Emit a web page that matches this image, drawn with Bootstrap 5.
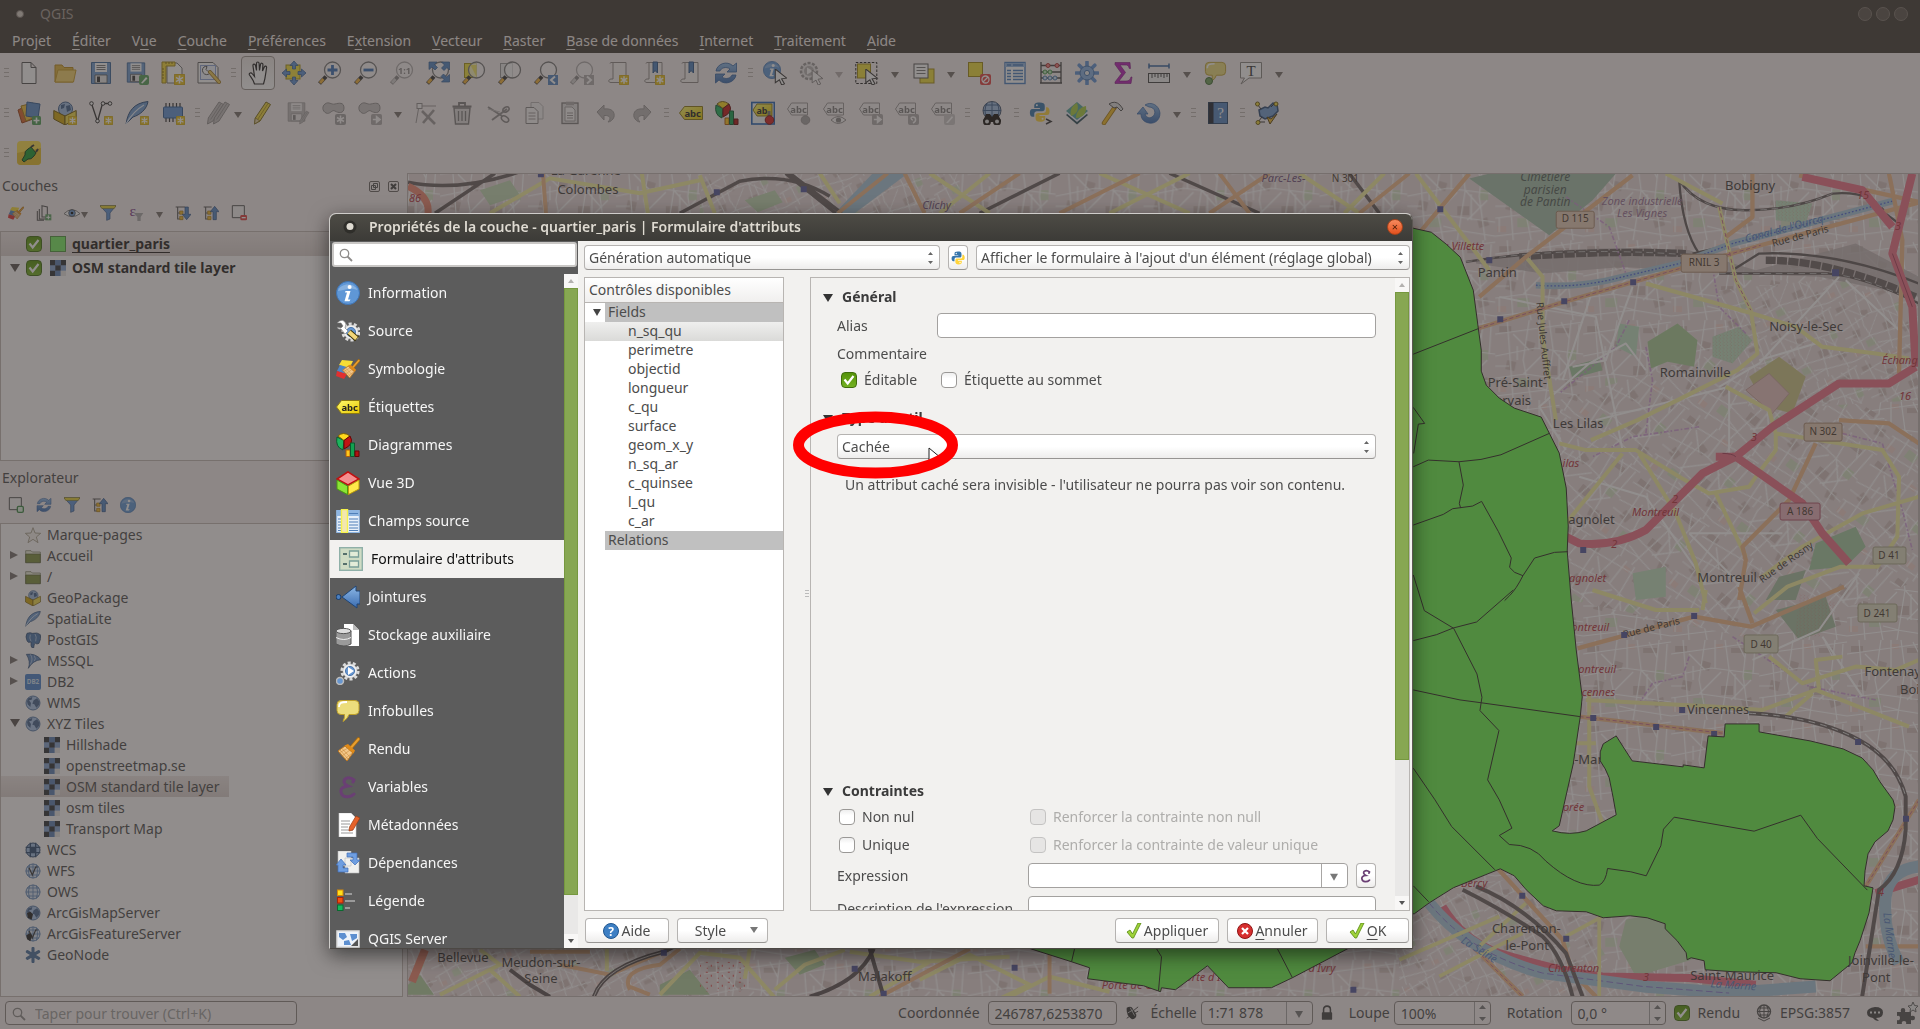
<!DOCTYPE html>
<html lang="fr">
<head>
<meta charset="utf-8">
<meta name="viewport" content="width=device-width, initial-scale=1">
<title>QGIS</title>
<link href="https://cdn.jsdelivr.net/npm/bootstrap@5.3.0/dist/css/bootstrap.min.css" rel="stylesheet">
<style>
  :root { --ink:#4c4c4c; --panel:#f2f1f0; --edge:#b8b5b2; --olive:#87a752; }
  html, body { height:100%; }
  body { font-family:"Noto Sans","Open Sans",sans-serif; font-size:14px; line-height:20px; color:var(--ink); background:#f6eeee; overflow:hidden; }
  button, input, select { font-family:inherit; font-size:14px; line-height:20px; color:var(--ink); }
  svg { display:block; flex:none; }
  svg text { font-family:"Noto Sans","Open Sans",sans-serif; }
  u { text-underline-offset:3px; }
  .ic16 { width:16px; height:16px; } .ic24 { width:24px; height:24px; }

  /* main window */
  .app-title { height:27px; background:#403a35; color:#a39a92; }
  .app-menu { height:26px; background:#403a35; padding:1px 0 0 2px; gap:1px; }
  .app-menu a { color:#f4eeea; text-decoration:none; padding:0 10px; }
  .win-dot { width:14px; height:14px; border-radius:50%; border:1px solid #7c746c; background:#5c554e; }
  .win-dot.lit { width:8px; height:8px; background:#d8d0c8; }
  .bar-row { height:40px; }
  .grip { width:13px; height:10px; background:repeating-linear-gradient(#bdb4b0 0 1px,transparent 1px 4px) 4px 0/5px 10px no-repeat; flex:none; }
  .grip:first-child { width:11px; }
  .tool { width:36px; height:36px; padding:0; border:0; background:none; display:flex; align-items:center; justify-content:center; flex:none; }
  .tool.slim { width:28px; }
  .tool.held > span { width:34px; height:34px; border:1px solid #9c948f; border-radius:4px; display:flex; align-items:center; justify-content:center; background:linear-gradient(#efe9e6,#fff); }
  .drop { width:20px; padding:0; border:0; background:none; height:24px; flex:none; display:flex; align-items:center; justify-content:center; }
  .drop.slim { width:12px; }
  .drop::before { content:""; border:4px solid transparent; border-top:6px solid #77706b; border-bottom:0; margin-top:4px; }
  .faded svg { filter:grayscale(1); opacity:.55; }
  .faded::before { opacity:.5; }
  .dock { width:403px; flex:none; }
  .dock-head { height:26px; padding:0 4px 0 2px; }
  .dock-tools { height:32px; padding:0 0 4px 8px; gap:12px; }
  .dock-tools button { border:0; background:none; padding:0; display:flex; align-items:center; gap:1px; }
  .mini { width:11px; height:11px; border:1px solid #6a6461; border-radius:2px; display:flex; align-items:center; justify-content:center; padding:0; background:none; }
  .tree { background:#fffdfd; border:1px solid #c4bab6; margin:0; padding:0; list-style:none; overflow:hidden; }
  .tree li { display:flex; align-items:center; height:21px; padding-left:9px; }
  .tree .layer { height:24px; font-weight:700; color:#241f1d; gap:8px; padding-left:9px; }
  .tree .layer .twist { margin-right:-1px; }
  .tree .layer .ic16 { margin-right:-2px; }
  .tree .chosen { background:linear-gradient(#efe7e5,#dcd2cf); }
  .tree .ic16 { margin-right:6px; }
  .tree .sub { padding-left:43px; }
  .tree .fit { width:228px; }
  .twist { width:9px; height:9px; margin-right:6px; flex:none; }
  .twist.open::before { content:""; display:block; border:5px solid transparent; border-top:8px solid #5a5552; border-bottom:0; width:0; }
  .twist.shut::before { content:""; display:block; border:4px solid transparent; border-left:8px solid #77716d; border-right:0; width:0; }
  .tick { appearance:none; width:16px; height:16px; margin:0; border:1px solid #9a9896; border-radius:4px; background:linear-gradient(#eee,#fff 40%); flex:none; }
  .tick:checked { border-color:#3f6d0c; background:url("data:image/svg+xml,%3Csvg xmlns='http://www.w3.org/2000/svg' viewBox='0 0 14 14'%3E%3Cpath d='M2.500 6.500l3.200 4L11.500 3' fill='none' stroke='white' stroke-width='2.200'/%3E%3C/svg%3E") center/14px no-repeat,linear-gradient(#549208,#74b222); }
  .tick:disabled { background:#e6e5e4; border-color:#c4c3c2; opacity:1; }
  .map-box { border:1px solid #c0b8b4; border-right-width:2px; min-width:0; overflow:hidden; position:relative; }
  .map-box svg { position:absolute; width:100%; height:100%; }
  .status { height:32px; padding:0 2px 0 5px; }
  .field { height:25px; border:1px solid #a3a19f; border-radius:4px; background-color:#fff; padding:0 6px; }
  .app .field { background-color:#fbf4f4; border-color:#8d8683; height:24px; }
  .find { position:relative; }
  .find svg { position:absolute; left:7px; top:6px; }
  .find .field { padding-left:29px; width:100%; }
  .find ::placeholder { color:#a0a09f; opacity:1; }
  .updown { appearance:none; background:url("data:image/svg+xml,%3Csvg xmlns='http://www.w3.org/2000/svg' width='8' height='14'%3E%3Cpath d='M1 4l2.500-3L6 4zM1 10l2.500 3L6 10z' fill='%23666'/%3E%3C/svg%3E") right 4px center no-repeat,linear-gradient(#fff,#fff 50%,#eeedec); border:1px solid #b5b3b1; border-bottom-color:#979593; border-radius:4px; height:25px; padding:0 20px 0 4px; min-width:0; }
  .downsel { appearance:none; background:url("data:image/svg+xml,%3Csvg xmlns='http://www.w3.org/2000/svg' width='26' height='24'%3E%3Cpath d='M0 0v24' stroke='%23a8a6a4' stroke-width='2'/%3E%3Cpath d='M9 10h8l-4 7z' fill='%23777'/%3E%3C/svg%3E") right center no-repeat #fff; }
  .spin { background:url("data:image/svg+xml,%3Csvg xmlns='http://www.w3.org/2000/svg' width='16' height='24'%3E%3Cpath d='M0 0v24' stroke='%23a8a6a4' stroke-width='2'/%3E%3Cpath d='M5 8l3.500-4L12 8zM5 16l3.500 4L12 16z' fill='%23777'/%3E%3C/svg%3E") right center no-repeat; }
  .shade { position:fixed; inset:0; background:rgba(62,56,54,.57); }

  /* layer properties window */
  .props { position:fixed; left:329px; top:213px; right:507px; bottom:80px; background:#f2f1ef; border:1px solid #cfcdca; border-right-color:#5a5651; border-bottom-color:#4c4844; border-radius:7px 7px 0 0; box-shadow:0 6px 20px rgba(0,0,0,.55); overflow:hidden; }
  .props-title { height:27px; background:linear-gradient(#4d4b45,#3c3b37); color:#dfdbd2; padding:0 9px 1px 13px; font-weight:600; gap:12px; }
  .props-title .shut-btn { width:16px; height:16px; border-radius:50%; border:1px solid #a8441c; background:linear-gradient(#f68a5e,#e4511d); color:#4a1c08; font-size:11px; line-height:12px; padding:0; }
  .side { width:248px; flex:none; background:#5c5c5c; }
  .side .find { margin:1px 1px 7px 2px; }
  .side .field { border:2px solid #c9c7c5; border-radius:3px; width:100%; }
  .side nav { overflow:hidden; }
  .side nav a { display:flex; align-items:center; height:38px; padding-left:6px; gap:8px; color:#f6f6f6; text-decoration:none; flex:none; }
  .side nav a.here { background:#f2f1ef; color:#111; padding-left:9px; }
  .scroller { width:14px; flex:none; background:#e9e8e7; display:flex; flex-direction:column; }
  .scroller i { height:14px; background:#f8f7f6; display:flex; align-items:center; justify-content:center; flex:none; }
  .scroller i::before { content:""; border:3px solid transparent; }
  .scroller i:first-child::before { border-bottom:4px solid #b3b1af; border-top:0; }
  .scroller i:last-child::before { border-top:4px solid #555; border-bottom:0; }
  .scroller b { background:var(--olive); border:1px solid #76983f; display:block; }
  .scroller .thumb-side { flex:0 1 90%; } .scroller .thumb-form { flex:0 1 74%; }
  .right-part { min-width:0; padding:4px 2px 0 6px; }
  .push { height:25px; border:1px solid #b5b3b1; border-bottom-color:#979593; border-radius:4px; background:linear-gradient(#fff,#fff 50%,#eeedec); padding:0; display:flex; align-items:center; justify-content:center; gap:2px; }
  .push.tiny { width:20px; flex:none; }
  .w-gen { flex:352 1 0; } .w-aff { flex:435 1 0; }
  .fields { width:200px; flex:none; background:#fff; border:1px solid var(--edge); }
  .fields-head { height:25px; padding:2px 0 0 4px; background:linear-gradient(#fff,#f0efee); border-bottom:1px solid var(--edge); }
  .fields ul { list-style:none; margin:0; padding:0; }
  .fields li { height:19px; line-height:18px; padding-left:43px; }
  .fields li.group-row { display:flex; padding-left:0; align-items:center; }
  .fields li.group-row span:last-child { background:#c0c0c0; flex:1; padding-left:3px; height:19px; }
  .fields .gap-cell { width:20px; padding-left:4px; display:flex; justify-content:center; flex:none; }
  .fields .gap-cell.open::before { content:""; border:4px solid transparent; border-top:7px solid #444; border-bottom:0; }
  .fields li.chosen { background:linear-gradient(#efefee,#dadad8); }
  .handle { width:26px; flex:none; display:flex; align-items:center; justify-content:flex-end; padding-right:1px; }
  .handle::after { content:""; width:4px; height:8px; background:repeating-linear-gradient(#bbb 0 1px,transparent 1px 3px); }
  .editor { border:1px solid var(--edge); overflow:hidden; min-width:0; }
  .form-area { padding:9px 19px 0 26px; overflow:hidden; min-width:0; height:100%; }
  .sec { font-size:14px; font-weight:700; color:#3b3b3b; margin:0 0 0 -14px; line-height:20px; display:flex; align-items:center; gap:9px; }
  .sec::before { content:""; border:5px solid transparent; border-top:8px solid #333; border-bottom:0; margin-top:2px; }
  .lab-a { width:100px; flex:none; } .lab-b { width:191px; flex:none; }
  .gap-row { margin-top:6px; flex-shrink:0; }
  .type-block { height:391px; padding-top:18px; flex:none; }
  .row-check { display:flex; align-items:center; height:20px; gap:7px; padding-left:2px; }
  .row-check.off { color:#aeadab; }
  .foot { height:25px; margin:7px 1px 5px 1px; }
  .ring { position:fixed; left:793px; top:411px; pointer-events:none; }
</style>
<script src="https://cdn.jsdelivr.net/npm/bootstrap@5.3.0/dist/js/bootstrap.bundle.min.js"></script>
</head>
<body>

<svg width="0" height="0" class="position-absolute" aria-hidden="true">
<defs>
  <linearGradient id="gb" x2="0" y2="1"><stop stop-color="#8db8e6"/><stop offset="1" stop-color="#3a6cb0"/></linearGradient>
  <linearGradient id="gy" x2="1" y2="1"><stop stop-color="#fffb70"/><stop offset="1" stop-color="#e8c800"/></linearGradient>
  <symbol id="badge-star" viewBox="0 0 9 9"><rect width="9" height="9" rx="1.500" fill="#eac21c" stroke="#b8900a" stroke-width=".6"/><path d="M4.500 1.200v6.600M1.600 2.800l5.800 3.400M1.600 6.200l5.800-3.400" stroke="#fff" stroke-width="1.300"/></symbol>
  <symbol id="badge-go" viewBox="0 0 9 9"><rect width="9" height="9" rx="1.500" fill="#777"/><path d="M1.500 4.500h4M4.500 2l3 2.500-3 2.500z" stroke="#fff" stroke-width="1.200" fill="#fff"/></symbol>
  <symbol id="new" viewBox="0 0 24 24"><path d="M5 1.500h9l5 5V22.500H5zM14 1.500v5h5" fill="#fff" stroke="#555"/></symbol>
  <symbol id="open" viewBox="0 0 24 24"><path d="M2 21V4h7l2 2.500h9V21z" fill="#e2b53c" stroke="#b98a18"/><path d="M2 21l3-12h18l-2.500 12z" fill="#f6d36b" stroke="#c79b25"/></symbol>
  <symbol id="save" viewBox="0 0 24 24"><path d="M2.500 1.500h19v21h-19z" fill="#6f9bd0" stroke="#3b6699"/><path d="M6 2h12v9H6z" fill="#fff"/><path d="M7.500 4.500h9M7.500 6.500h9M7.500 8.500h9" stroke="#777"/><path d="M6 14h12v8H6z" fill="#e8e8e8" stroke="#555" stroke-width=".8"/><path d="M8 15.500h3V21H8z" fill="#333"/></symbol>
  <symbol id="saveas" viewBox="0 0 24 24"><use href="#save" width="22" height="23"/><rect x="14" y="14" width="10" height="10" rx="2" fill="#57a05b"/><path d="M16 22l5-6 1.500 1.500-5 5z" fill="#fff"/></symbol>
  <symbol id="layout" viewBox="0 0 24 24"><path d="M6 2h10l5 5v15H6z" fill="#fff" stroke="#777"/><path d="M1 1h13v4H5v17H1z" fill="#f7d936" stroke="#a58b15"/><path d="M5 1v2M8 1v2M11 1v2M1 8h2M1 11h2M1 14h2M1 17h2" stroke="#8b7410"/><use href="#badge-star" x="13" y="13" width="11" height="11"/></symbol>
  <symbol id="wrench" viewBox="0 0 24 24"><path d="M1 1.500h15l5 5V22H1z" fill="#fff" stroke="#666"/><rect x="3.500" y="4.500" width="15" height="14" fill="#f2f5ff" stroke="#8fa4d8"/><path d="M7 6a4.300 4.300 0 1 0 7 4l-3 .5-2-2 1-3a4 4 0 0 0-3 .5z" fill="#fff" stroke="#555"/><path d="M13 11l9 10" stroke="#997522" stroke-width="4" stroke-linecap="round"/><path d="M13 11l9 10" stroke="#f1cc59" stroke-width="2.500" stroke-linecap="round"/></symbol>
  <symbol id="hand" viewBox="0 0 24 24"><path d="M8.500 23c-1-4-3-6-5-9-1-2 1.500-3 3-1l2 2.500L7 5c-.3-2.300 2-2.500 2.500-.5l1 5V2.500c0-2 2.500-2 2.600 0l.4 7 1-6c.4-2 2.600-1.500 2.400.4L16.500 10l1.800-4c.8-1.700 2.600-1 2.200 1-.8 5-1 10-3 16z" fill="#fff" stroke="#222" stroke-width="1.200"/></symbol>
  <symbol id="pan" viewBox="0 0 24 24"><rect x="4" y="4" width="14" height="14" fill="#f5e13a" stroke="#a8940e"/><g fill="#5f93d6" stroke="#345f98" stroke-width=".8"><path d="M12 0l4 4.500h-2.500V8h-3V4.500H8zM12 24l4-4.500h-2.500V16h-3v3.500H8zM0 12l4.500-4v2.500H8v3H4.500V16zM24 12l-4.500-4v2.500H16v3h3.500V16z"/></g></symbol>
  <symbol id="mag" viewBox="0 0 24 24"><path d="M1.500 22.500L8 15.500" stroke="#333" stroke-width="4"/><path d="M2 22l3.500-4" stroke="#f4b338" stroke-width="3"/><circle cx="14.500" cy="9" r="8" fill="#fff" fill-opacity=".65" stroke="#777" stroke-width="1.300"/></symbol>
  <symbol id="zin" viewBox="0 0 24 24"><use href="#mag"/><path d="M14.500 4v10M9.500 9h10" stroke="#3b6fb4" stroke-width="2.800"/></symbol>
  <symbol id="zout" viewBox="0 0 24 24"><use href="#mag"/><path d="M9.500 9h10" stroke="#3b6fb4" stroke-width="2.800"/></symbol>
  <symbol id="z11" viewBox="0 0 24 24"><use href="#mag"/><text x="14.500" y="12.500" font-size="9" font-weight="700" text-anchor="middle" fill="#333">1:1</text></symbol>
  <symbol id="zfull" viewBox="0 0 24 24"><use href="#mag"/><g fill="#4f84c4" stroke="#2f5c94" stroke-width=".7"><path d="M3 1h8L8.500 3.500l3 3-2.500 2.500-3-3L3 8.500zM23.500 1v8L21 6.500l-3 3L15.500 7l3-3L15.500 1zM23.500 21h-8l2.500-2.500-3-3 2.500-2.500 3 3 3-2.500z"/></g></symbol>
  <symbol id="zsel" viewBox="0 0 24 24"><rect x="2.500" y="2.500" width="12" height="14" fill="#f2e13d" stroke="#a8940e"/><use href="#mag"/><path d="M8.500 4h6v12" fill="#f2e13d" opacity=".7"/></symbol>
  <symbol id="zlayer" viewBox="0 0 24 24"><rect x="2.500" y="2.500" width="12" height="14" fill="#e8e8e8" stroke="#999"/><use href="#mag"/></symbol>
  <symbol id="zlast" viewBox="0 0 24 24"><use href="#mag"/><rect x="14" y="14" width="10" height="10" fill="#5485c1"/><path d="M21 15.500L17 19l4 3.500" fill="none" stroke="#fff" stroke-width="2"/></symbol>
  <symbol id="znext" viewBox="0 0 24 24"><use href="#mag"/><rect x="14" y="14" width="10" height="10" fill="#777"/><path d="M17 15.500l4 3.500-4 3.500" fill="none" stroke="#fff" stroke-width="2"/></symbol>
  <symbol id="bm0" viewBox="0 0 24 24"><path d="M4 2.500c0-1 1-1 1-1h15v20H5c-3 0-3-3 0-3.500H7V2" fill="#f7f4f2" stroke="#8f8a87"/></symbol>
  <symbol id="bm1" viewBox="0 0 24 24"><use href="#bm0"/><use href="#badge-star" x="13" y="14" width="10" height="10"/></symbol>
  <symbol id="bm3" viewBox="0 0 24 24"><use href="#bm0"/><path d="M11 1h4.500v11L13 9.500 11 12z" fill="#4b80bf" stroke="#2d5588"/></symbol>
  <symbol id="bm2" viewBox="0 0 24 24"><use href="#bm3"/><use href="#badge-star" x="13" y="14" width="10" height="10"/></symbol>
  <symbol id="refresh" viewBox="0 0 24 24"><path d="M2 10C3 3 13-1 19 5l3.500-3v9H13l3-3c-4-3-9-1-10 2zM22 14c-1 7-11 11-17 5l-3.500 3v-9H11l-3 3c4 3 9 1 10-2z" fill="url(#gb)" stroke="#2e5fa0" stroke-width=".8"/></symbol>
  <symbol id="cur" viewBox="0 0 12 14"><path d="M1 0l10 8-4.500.6L9 13l-2.400 1-2-4.600L1 12z" fill="#fff" stroke="#333" stroke-width=".9"/></symbol>
  <symbol id="info" viewBox="0 0 24 24"><circle cx="12" cy="12" r="11.500" fill="#5f97d6" stroke="#3f74b4"/><path d="M2 10C4 2 18 1 21.500 9 14 6 8 9 2 10z" fill="#fff" opacity=".25"/><circle cx="13.600" cy="6" r="2" fill="#fff"/><path d="M9.500 10h5l-2.500 8.500h2.500l-1 1.800H8.500L11 11.600H9z" fill="#fff"/></symbol>
  <symbol id="identify" viewBox="0 0 24 24"><use href="#info" width="18" height="18"/><use href="#cur" x="11" y="8" width="14" height="16"/></symbol>
  <symbol id="cog" viewBox="0 0 24 24"><circle cx="12" cy="12" r="9.500" fill="none" stroke="#dcdcdc" stroke-width="4" stroke-dasharray="3.500 2.470"/><circle cx="12" cy="12" r="8.500" fill="#efefef" stroke="#bbb" stroke-width=".5"/><circle cx="12" cy="12" r="5.500" fill="#6796cf" stroke="#3d6ba6"/></symbol>
  <symbol id="action" viewBox="0 0 24 24"><circle cx="10" cy="10" r="8" fill="#ddd" stroke="#555" stroke-width="2.500" stroke-dasharray="3 1.500"/><circle cx="10" cy="10" r="5" fill="#888"/><path d="M8 6.500l6 3.500-6 3.500z" fill="#fff"/><use href="#cur" x="12" y="9" width="13" height="15"/></symbol>
  <symbol id="select" viewBox="0 0 24 24"><rect x=".8" y="1.500" width="21" height="21" fill="none" stroke="#222" stroke-dasharray="2.500 1.500"/><rect x="2.500" y="3" width="13" height="14" fill="#f2de38" stroke="#a08a10"/><use href="#cur" x="9" y="8" width="15" height="16"/></symbol>
  <symbol id="selform" viewBox="0 0 24 24"><rect x="9" y="8" width="14" height="14" fill="#f2de38" stroke="#a08a10"/><rect x="3" y="3" width="14" height="14" fill="#fff" stroke="#555"/><path d="M5.500 6.500h9M5.500 9.500h9M5.500 12.500h9" stroke="#777"/></symbol>
  <symbol id="desel" viewBox="0 0 24 24"><rect x="1.500" y="1.500" width="14" height="14" fill="#f2de38" stroke="#a08a10"/><rect x="13" y="13" width="11" height="11" rx="2" fill="#e34242"/><circle cx="18.500" cy="18.500" r="3.500" fill="none" stroke="#fff" stroke-width="1.300"/><path d="M16 21l5-5" stroke="#fff" stroke-width="1.300"/></symbol>
  <symbol id="table" viewBox="0 0 24 24"><rect x="2" y="1.500" width="20" height="21" fill="#fff" stroke="#4a7fc0" stroke-width="1.400"/><path d="M2 2h20v4H2z" fill="#8fb6e2"/><path d="M4 9.500h4M10 9.500h10M4 12.500h4M10 12.500h10M4 15.500h4M10 15.500h10M4 18.500h4M10 18.500h10M4 4h4M10 4h10" stroke="#4a7fc0" stroke-width="1.300"/></symbol>
  <symbol id="abacus" viewBox="0 0 24 24"><path d="M2 1v21M22 1v21M1 22h22M2 4.500h20M2 11h20M2 17h20" stroke="#444" stroke-width="1.300" fill="none"/><g fill="#f08080" stroke="#b03030"><circle cx="9" cy="4.500" r="2"/><circle cx="18" cy="4.500" r="2"/></g><g fill="#bfe8bf" stroke="#4a9a4a"><circle cx="6" cy="11" r="2"/><circle cx="11" cy="11" r="2"/></g><g fill="#cfe2f5" stroke="#4a7ab0"><circle cx="6" cy="17" r="2"/><circle cx="11" cy="17" r="2"/><circle cx="16" cy="17" r="2"/></g></symbol>
  <symbol id="gear" viewBox="0 0 24 24"><path d="M12 1v22M1 12h22M4.200 4.200l15.600 15.600M19.800 4.200L4.200 19.800" stroke="#5f93d6" stroke-width="3.600" stroke-linecap="round"/><circle cx="12" cy="12" r="7" fill="#86b1e4" stroke="#4675b0"/><circle cx="12" cy="12" r="2.600" fill="#f2f1f0" stroke="#4675b0"/></symbol>
  <symbol id="sigma" viewBox="0 0 24 24"><path d="M4 1.500h15l.5 6h-1.200C17.500 4.500 16.500 4 14 4H9l5.500 7.500L8 20h7c3 0 4-1 5-4h1l-1 6.500H4V21l6.500-8.500L4 3.500z" fill="#b81cb8" stroke="#7b0f7b" stroke-width=".6"/></symbol>
  <symbol id="ruler" viewBox="0 0 24 24"><path d="M2 5h20M2 2.500v5M22 2.500v5" stroke="#31639e" stroke-width="1.500"/><rect x="1.500" y="12.500" width="21" height="9" fill="#f0f0f0" stroke="#444"/><path d="M5 13v4M8 13v3M11 13v4M14 13v3M17 13v4M20 13v3" stroke="#444"/></symbol>
  <symbol id="tip" viewBox="0 0 24 24"><path d="M5 1.500h14q4 0 4 4v6q0 4-4 4h-6q-1 4-6 7 2-4 1.500-7H5q-4 0-4-4v-6q0-4 4-4z" fill="#ecdd7c" stroke="#bd9f2a"/><path d="M3 8c0-4 2-5 8-5" stroke="#fff" stroke-width="1.800" fill="none"/></symbol>
  <symbol id="maptip" viewBox="0 0 24 24"><use href="#tip" x="1" width="23" height="22"/><circle cx="6" cy="20" r="3.500" fill="#6fa05c" stroke="#3e6b30"/></symbol>
  <symbol id="annot" viewBox="0 0 24 24"><path d="M1.500 1.500h21V17H10l-8 6 3.500-6h-4z" fill="#fff" stroke="#8a8683"/><text x="12" y="15" font-size="15" text-anchor="middle" fill="#333" style="font-family:'Liberation Serif',serif">T</text></symbol>
  <symbol id="source-mgr" viewBox="0 0 24 24"><path d="M1 9l12-6 3 15-11 4z" fill="#d9662c" stroke="#9a3f14"/><path d="M4 5l12-3 3 14-10 4z" fill="#f3c23d" stroke="#a87d12"/><path d="M10 1l13 2-2 14-12-2z" fill="#5b8cc8" stroke="#2f5c94"/><rect x="15" y="15" width="9" height="9" rx="1.500" fill="#4f9e57"/><path d="M19.500 16.500v6M16.500 19.500h6" stroke="#fff" stroke-width="1.600"/></symbol>
  <symbol id="globe" viewBox="0 0 24 24"><circle cx="12" cy="12" r="10.500" fill="#a9c6ea" stroke="#4b6f9e" stroke-width="1.400"/><path d="M5 5l6-2-1 4-4 1 3 4-1 6-4-4-1-5zM13 8l5-3 4 5-1 5-4 4-3-5-3-1z" fill="#46648e"/></symbol>
  <symbol id="box" viewBox="0 0 24 24"><circle cx="12.500" cy="8" r="7" fill="#9dbbe0" stroke="#3d5f8c"/><path d="M8 4l4-1-1 4-3 1zM13 5l4-1 1 5-4 2z" fill="#3d5f8c"/><path d="M.8 9.500L12 15v9L.8 18z" fill="#d4a80c" stroke="#6f5806"/><path d="M23.200 9.500L12 15v9l11.200-6z" fill="#f4dc4c" stroke="#6f5806"/></symbol>
  <symbol id="newgpkg" viewBox="0 0 24 24"><use href="#box"/><use href="#badge-star" x="15" y="15" width="9" height="9"/></symbol>
  <symbol id="vnew" viewBox="0 0 24 24"><path d="M2.500 2.500l6 18 5-18h8" fill="none" stroke="#333" stroke-width="1.300"/><g fill="#fff" stroke="#333"><circle cx="2.500" cy="2.500" r="1.800"/><circle cx="14" cy="2.500" r="1.800"/><circle cx="21" cy="2.500" r="1.800"/><circle cx="8.500" cy="20" r="1.800"/></g><use href="#badge-star" x="15" y="15" width="9" height="9"/></symbol>
  <symbol id="feather" viewBox="0 0 24 24"><path d="M1 23C3 10 9 2 23 .5 22 8 15 14 8 16z" fill="#6f9bd0" stroke="#2c4e7c"/><path d="M1 23C6 14 12 8 19 4" stroke="#e6eefa" fill="none" stroke-width="1.200"/></symbol>
  <symbol id="newfeather" viewBox="0 0 24 24"><use href="#feather"/><use href="#badge-star" x="15" y="15" width="9" height="9"/></symbol>
  <symbol id="chip" viewBox="0 0 24 24"><path d="M5 2v19M8.500 2v19M12 2v19M15.500 2v19M19 2v19" stroke="#333" stroke-width="1.200"/><rect x="2.500" y="6" width="19" height="11" rx="1" fill="#5f93d6" stroke="#2f5c94"/><use href="#badge-star" x="15" y="15" width="9" height="9"/></symbol>
  <symbol id="pencil" viewBox="0 0 24 24"><path d="M16 1l4.500 2.500L10 20l-5.500 3 .8-6z" fill="#f3da3c" stroke="#7b6a14"/><path d="M5.300 17l4.500 2.800L4.500 23z" fill="#e8d3a8" stroke="#7b6a14" stroke-width=".7"/><path d="M18 2.500L7.600 18.500" stroke="#b59a1c"/></symbol>
  <symbol id="greypencil" viewBox="0 0 24 24"><path d="M16 1l4.500 2.500L10 20l-5.500 3 .8-6z" fill="#999" stroke="#444"/><path d="M18 2.500L7.600 18.500" stroke="#555"/></symbol>
  <symbol id="pencils" viewBox="0 0 24 24"><use href="#greypencil" x="-3"/><use href="#greypencil" x="3"/></symbol>
  <symbol id="savedit" viewBox="0 0 24 24"><use href="#save" width="21" height="22"/><use href="#greypencil" x="11" y="9" width="14" height="15"/></symbol>
  <symbol id="blob" viewBox="0 0 24 24"><path d="M3 3c4-3 6 1 10 0s9-2 9 4-6 5-9 3-5 4-9 2-4-7-1-9z" fill="#a5a2a0" stroke="#444"/></symbol>
  <symbol id="addpoly" viewBox="0 0 24 24"><use href="#blob"/><rect x="13" y="13" width="11" height="11" rx="2" fill="#666"/><path d="M18.500 14.500v8M15 16.500l7 4M15 20.500l7-4" stroke="#fff" stroke-width="1.500"/></symbol>
  <symbol id="movepoly" viewBox="0 0 24 24"><use href="#blob"/><use href="#badge-go" x="13" y="13" width="11" height="11"/></symbol>
  <symbol id="vertex" viewBox="0 0 24 24"><path d="M2 22L5 5h17" fill="none" stroke="#555"/><rect x="3" y="2.500" width="5" height="5" fill="#fff" stroke="#444"/><path d="M8 10l13 13M20 9L9 22" stroke="#555" stroke-width="2.600"/></symbol>
  <symbol id="trash" viewBox="0 0 24 24"><path d="M4 7h16l-1.500 16h-13z" fill="#ccc" stroke="#222" stroke-width="1.400"/><path d="M2.500 5.500h19M9 5V2h6v3" stroke="#222" stroke-width="1.800" fill="none"/><path d="M8.500 10v10M12 10v10M15.500 10v10" stroke="#222" stroke-width="1.300"/></symbol>
  <symbol id="cut" viewBox="0 0 24 24"><path d="M2 6l14 9M6 19L21 8" stroke="#444" stroke-width="2"/><path d="M2 8l12 3" stroke="#888"/><ellipse cx="19" cy="18" rx="4" ry="2.600" transform="rotate(35 19 18)" fill="none" stroke="#333" stroke-width="1.500"/><ellipse cx="20" cy="8.500" rx="3.300" ry="2.300" transform="rotate(-30 20 8.500)" fill="none" stroke="#333" stroke-width="1.500"/></symbol>
  <symbol id="copy" viewBox="0 0 24 24"><path d="M9 1.500h8l4 4V18H9z" fill="#f2f2f2" stroke="#888"/><path d="M4 6.500h8l4 4V22.500H4z" fill="#fff" stroke="#333"/><path d="M6.500 12h7M6.500 15h7M6.500 18h7" stroke="#555"/></symbol>
  <symbol id="paste" viewBox="0 0 24 24"><rect x="4" y="2" width="16" height="20.500" fill="#d5d0cc" stroke="#222" stroke-width="1.300"/><rect x="8" y=".7" width="8" height="3.500" fill="#777"/><path d="M7 6h7l3 3v11H7z" fill="#fff" stroke="#666"/><path d="M9 12h6M9 14.500h6M9 17h6" stroke="#555"/></symbol>
  <symbol id="undo" viewBox="0 0 24 24"><path d="M3 11l7-7v4c8-1 11 3 10 8-1 3-4 5-6 5 3-3 3-7-4-6.500V19z" fill="#8d8986" stroke="#555"/></symbol>
  <symbol id="redo" viewBox="0 0 24 24"><path d="M21 11l-7-7v4C6 7 3 11 4 16c1 3 4 5 6 5-3-3-3-7 4-6.500V19z" fill="#8d8986" stroke="#555"/></symbol>
  <symbol id="abc" viewBox="0 0 24 24"><path d="M.5 12l5-6.500h18v13h-18z" fill="url(#gy)" stroke="#8d7a12"/><text x="13.700" y="15.700" font-size="9.500" font-weight="700" text-anchor="middle" fill="#222">abc</text></symbol>
  <symbol id="abcs" viewBox="0 0 24 24"><path d="M.5 8l4-6h16v12h-16z" fill="#f6f6f6" stroke="#555"/><text x="11.500" y="11.500" font-size="9.500" font-weight="700" text-anchor="middle" fill="#222">abc</text></symbol>
  <symbol id="diagram" viewBox="0 0 24 24"><path d="M8 7.500L1 4Q-1 14 7 17z" fill="#1db35e" stroke="#0c5a2c"/><path d="M8 7.500L2 3Q7-2 14 3z" fill="#ffd91c" stroke="#7a6208"/><path d="M8 7.500L14 3q5 8-6 13z" fill="#c01414" stroke="#640606"/><path d="M10 17h4v6.500h-4z" fill="#ffc81c" stroke="#b35c08"/><path d="M14.500 10h4v13.500h-4z" fill="#12a150" stroke="#0a5a2c"/><path d="M19 18h4v5.500h-4z" fill="#b01212" stroke="#640606"/></symbol>
  <symbol id="abh" viewBox="0 0 24 24"><rect x=".8" y="1.500" width="22.500" height="21.500" fill="#f4f7fb" stroke="#2463b4" stroke-width="1.600"/><path d="M2 9l4-6h15v12H6z" fill="url(#gy)" stroke="#8d7a12"/><text x="11" y="12.500" font-size="9" font-weight="700" text-anchor="middle" fill="#222">ab</text><path d="M18 10v10" stroke="#777" stroke-width="3"/><circle cx="18.500" cy="19" r="4.300" fill="#d61c1c" stroke="#7c0b0b"/></symbol>
  <symbol id="abpin" viewBox="0 0 24 24"><use href="#abcs"/><circle cx="18.500" cy="19" r="4.300" fill="#666" stroke="#444"/></symbol>
  <symbol id="abeye" viewBox="0 0 24 24"><use href="#abcs"/><path d="M8 19q7-7 15 0-8 7-15 0z" fill="#fff" stroke="#444"/><circle cx="15.500" cy="19" r="2.600" fill="#333"/></symbol>
  <symbol id="abgo" viewBox="0 0 24 24"><use href="#abcs"/><use href="#badge-go" x="13" y="13" width="11" height="11"/></symbol>
  <symbol id="abrot" viewBox="0 0 24 24"><use href="#abcs"/><rect x="13" y="13" width="11" height="11" rx="2" fill="#777"/><path d="M18 22c4-2 3-6 0-6s-2 3 0 3" stroke="#fff" stroke-width="1.500" fill="none"/></symbol>
  <symbol id="abedit" viewBox="0 0 24 24"><use href="#abcs"/><rect x="13" y="13" width="11" height="11" rx="2" fill="#aaa"/><path d="M15 22l6-7 1 1.500-5 5.500z" fill="#fff"/></symbol>
  <symbol id="metasearch" viewBox="0 0 24 24"><circle cx="12" cy="9.500" r="9" fill="#9dbbe0" stroke="#3d4f68"/><path d="M12 .5v18M3 9.500h18M5 4h14M5 15h14M7 2q-4 8 0 15M17 2q4 8 0 15" stroke="#3d5f8c" fill="none"/><path d="M6 13h4l2 3 2-3h4l3 7-8 1h-2l-8-1z" fill="#16120f"/><circle cx="7" cy="20.500" r="3" fill="#ddd" stroke="#16120f" stroke-width="2"/><circle cx="17" cy="20.500" r="3" fill="#ddd" stroke="#16120f" stroke-width="2"/></symbol>
  <symbol id="python" viewBox="0 0 24 24"><path d="M12 1c-5 0-6 1.500-6 4v2.500h6.500v1H4C1.500 8.500 1 11 1 13s1 4.500 3 4.500h2V14c0-2 1.500-3 3-3h6c2 0 3-1 3-3V5c0-3-2-4-6-4z" fill="#3776ab"/><circle cx="9" cy="4.300" r="1.100" fill="#fff"/><path d="M12.500 23c5 0 6-1.500 6-4v-2.500H12v-1h8.500c2.500 0 3-2.500 3-4.500s-1-4.500-3-4.500h-1V10c0 2-1.500 3-3 3h-6c-2 0-3 1-3 3v3c0 3 2 4 5 4z" fill="#ffd43b"/><circle cx="15.500" cy="19.700" r="1.100" fill="#fff"/></symbol>
  <symbol id="console" viewBox="0 0 24 24"><use href="#python" width="21" height="22"/><path d="M17 18l5 2.500-5 2.500" fill="none" stroke="#333" stroke-width="1.500"/></symbol>
  <symbol id="leafs" viewBox="0 0 24 24"><path d="M1 14l11-9 11 9-11 9.500z" fill="#2c4d58"/><path d="M1 12l11-9 11 9-11 9z" fill="#eef"/><path d="M1 10l11-9 11 9-11 9z" fill="#54a6a0"/><path d="M6 15C4 8 9 3 12 2c2 5 1 11-6 13zM11 17c0-7 5-11 10-12 1 7-3 12-10 12z" fill="#a9cf3f"/></symbol>
  <symbol id="hammer" viewBox="0 0 24 24"><path d="M3 22L14 6" stroke="#a87a12" stroke-width="4.500" stroke-linecap="round"/><path d="M3 22L12.500 8" stroke="#f4bd25" stroke-width="2.800" stroke-linecap="round"/><path d="M8 3q6-4 11 1l3 4-2 2-4-4-3 1z" fill="#ddd" stroke="#555"/></symbol>
  <symbol id="reload" viewBox="0 0 24 24"><path d="M0 13l6-7 5 7H8c1 3 4 5 7 3 5-3 3-10-3-10L8 4c6-4 14 0 15 8 0 8-6 11-11 10-6-1-8-5-8-9z" fill="url(#gb)" stroke="#2d62a8" stroke-width=".7"/></symbol>
  <symbol id="book" viewBox="0 0 24 24"><rect x="2.500" y="1.500" width="19" height="21" fill="#5485c1" stroke="#27466e"/><rect x="2.500" y="1.500" width="5" height="21" fill="#1e2633"/><text x="14.500" y="17" font-size="15" text-anchor="middle" fill="#fff" style="font-family:'Liberation Serif',serif">?</text></symbol>
  <symbol id="topo" viewBox="0 0 24 24"><path d="M4 9l6-3 3 1 5-5 4 1 1 7-5 5-8 3-5-3z" fill="#6f9bd0" stroke="#2a4a74" stroke-width="1.500"/><path d="M2.500 3.500L6 8M3 21l4-5M10 21l-6 0M20 2l-4 4" stroke="#333"/><g fill="#f3da3c" stroke="#6f5d0a"><circle cx="2.500" cy="3" r="2"/><circle cx="21" cy="3" r="2"/><circle cx="3" cy="21.500" r="2"/></g><path d="M12 16l3 7 7-10-6 5z" fill="#f0b92c" stroke="#5a430a"/></symbol>
  <symbol id="plug" viewBox="0 0 24 24"><rect width="24" height="24" rx="4" fill="#ffe04c"/><path d="M0 12l24-5v13q0 4-4 4H4q-4 0-4-4z" fill="#e8c02a"/><path d="M5 19l3-5q-1-4 3-6l3-2 5 6-2 3q-3 4-6 3l-4 3z" fill="#189a30" stroke="#0b3d15"/><path d="M14 6l3-2M19 11l2-3" stroke="#333" stroke-width="2"/></symbol>
  <symbol id="broom" viewBox="0 0 24 24"><path d="M13 13L22.500 2" stroke="#a56a12" stroke-width="3.600" stroke-linecap="round"/><path d="M13 13L22.500 2" stroke="#e89f30" stroke-width="2" stroke-linecap="round"/><path d="M2 14l7-5 8 7-6 8z" fill="#f3c789" stroke="#b9751f"/><path d="M4 13l8 9M6 11.500l8 8.500M3 16l9-5M6 19l8-6M9 22l7-6" stroke="#c98a3a" stroke-width=".6"/><path d="M8.500 8.500l9 8 1.500-3-7-6.500z" fill="#e08a18"/></symbol>
  <symbol id="brush" viewBox="0 0 24 24"><path d="M6 3l11 1-4 8L3 8z" fill="#f7dc36"/><path d="M4 8l10 3-5 6-8-3z" fill="#4f84c4"/><path d="M1 14l10 3-3 5-8-3z" fill="#e13030"/><use href="#broom" x="5" y="2" width="19" height="19"/></symbol>
  <symbol id="addgroup" viewBox="0 0 24 24"><path d="M9 1l8 2v15H9zM5 6v15h11M2 9v14h10" fill="none" stroke="#555" stroke-width="1.600"/><rect x="14" y="14" width="9" height="9" fill="#5aa060"/><path d="M18.500 15.500v6M15.500 18.500h6" stroke="#fff" stroke-width="1.500"/></symbol>
  <symbol id="eye" viewBox="0 0 24 24"><path d="M0 13Q12 1 24 13 12 22 0 13z" fill="#fff" stroke="#777" stroke-width="1.400"/><circle cx="12" cy="12" r="5" fill="#6c9cd6" stroke="#333"/><circle cx="12" cy="12" r="2" fill="#111"/></symbol>
  <symbol id="funnel" viewBox="0 0 24 24"><path d="M0 1h24l-9 11v9l-5 2V12z" fill="#5f93d6" stroke="#2d5588"/><path d="M0 1h24l-2.500 4h-19z" fill="#f3df3a" stroke="#8c7a10"/></symbol>
  <symbol id="epsfil" viewBox="0 0 24 24"><text x="7" y="16" font-size="23" text-anchor="middle" fill="#7c3a86" style="font-family:'Liberation Serif',serif">ε</text><path d="M9 12h14l-4 6v6h-5v-6z" fill="#aaa"/></symbol>
  <symbol id="expand" viewBox="0 0 24 24"><path d="M1 3h14M4 3v18h8M4 12h8" stroke="#555" stroke-width="1.600" fill="none"/><path d="M7 9h5v5H7zM7 17h5v5H7z" fill="#f0b92c" stroke="#a97a10"/><path d="M15 3h5v11h4l-6.500 8L11 14h4z" fill="#5587c6" stroke="#234a7e"/></symbol>
  <symbol id="collapse" viewBox="0 0 24 24"><path d="M1 3h12M4 3v18h8M4 12h8" stroke="#555" stroke-width="1.600" fill="none"/><path d="M7 9h5v5H7zM7 17h5v5H7z" fill="#f0b92c" stroke="#a97a10"/><path d="M15 22h5V10h4l-6.500-8L11 10h4z" fill="#5587c6" stroke="#234a7e"/></symbol>
  <symbol id="remove" viewBox="0 0 24 24"><path d="M2 1h18v18H2z" fill="#f6f4f3" stroke="#555" stroke-width="1.500"/><rect x="14" y="15" width="10" height="8" rx="2" fill="#e03c3c"/><path d="M16 19h6" stroke="#fff" stroke-width="2"/></symbol>
  <symbol id="addlayer" viewBox="0 0 24 24"><path d="M2 1h18v18H2z" fill="#f6f4f3" stroke="#555" stroke-width="1.500"/><rect x="14" y="14" width="9" height="9" rx="2" fill="#dff0df" stroke="#3e8a46" stroke-width="2"/></symbol>
  <symbol id="star" viewBox="0 0 24 24"><path d="M12 1l3 8 8.500.5-6.500 5.500 2.500 8.500L12 18.500 4.500 23.500 7 15 .5 9.500 9 9z" fill="#f7f4ee" stroke="#a8a08e" stroke-width="1.400"/></symbol>
  <symbol id="folder" viewBox="0 0 24 24"><path d="M1 4h8l2 2h12v16H1z" fill="#eef0dc" stroke="#6f7357"/><path d="M1 9h22v13H1z" fill="#7d8f3c" stroke="#555c33"/></symbol>
  <symbol id="elephant" viewBox="0 0 24 24"><path d="M3 2q5-2 8 0 8-2 12 2 2 5-2 13l-3 1q-3-2-4 0l-1 6q-4 0-4-4v-5q-5 2-6-2-3-6 0-11z" fill="#4c77ac" stroke="#1f3b60"/><path d="M8 4q-2 5 1 10M15 3q3 4 1 11" stroke="#cfe0f4" fill="none"/></symbol>
  <symbol id="mssql" viewBox="0 0 24 24"><path d="M2 2q14-2 22 8-12 1-19 13 4-10-3-21z" fill="#5d86bd" stroke="#29476e"/><path d="M8 2q5 7 0 15M14 4q3 5 0 8" stroke="#d5e3f4" fill="none"/></symbol>
  <symbol id="db2" viewBox="0 0 24 24"><rect width="24" height="24" rx="3" fill="#4a83cc"/><text x="12" y="15.500" font-size="9.500" font-weight="700" text-anchor="middle" fill="#d5e3f4">DB2</text></symbol>
  <symbol id="tile" viewBox="0 0 24 24"><path d="M0 0h24v24H0z" fill="#84a5d4"/><path d="M0 0h8v8H0zM16 0h8v8h-8zM8 8h8v8H8zM0 16h8v8H0z" fill="#2e3137"/><path d="M8 0h8v8H8zM8 16h8v8H8z" fill="#5a7fb4"/><path d="M16 16h8v8h-8z" fill="#e8e6e4"/></symbol>
  <symbol id="wcs" viewBox="0 0 24 24"><circle cx="12" cy="12" r="10.500" fill="#9dbbe0" stroke="#2d4a72" stroke-width="1.500"/><path d="M1 8h22M1 16h22M8 1v22M16 1v22" stroke="#2d4a72" stroke-width="2"/><path d="M8 8h8v8H8z" fill="#2d4a72"/></symbol>
  <symbol id="ows" viewBox="0 0 24 24"><circle cx="12" cy="12" r="10.500" fill="#d8e4f4" stroke="#5f86b8" stroke-width="1.500"/><path d="M1 12h22M3 6h18M3 18h18M12 1v22M7 2q-4 10 0 20M17 2q4 10 0 20" stroke="#5f86b8" fill="none" stroke-width="1.300"/></symbol>
  <symbol id="wfs" viewBox="0 0 24 24"><use href="#ows"/><path d="M6 7l5 11 5-12h3" stroke="#333" stroke-width="1.800" fill="none"/></symbol>
  <symbol id="arcgis" viewBox="0 0 24 24"><use href="#globe"/><path d="M3 12l5-2 4 4-2 8-6-3z" fill="#222"/></symbol>
  <symbol id="arcgisf" viewBox="0 0 24 24"><use href="#wfs"/><path d="M2 14l5-3 4 3-3 9-5-3z" fill="#222"/></symbol>
  <symbol id="geonode" viewBox="0 0 24 24"><path d="M12 2v20M3.500 7l17 10M20.500 7l-17 10" stroke="#48709f" stroke-width="4.600" stroke-linecap="round"/></symbol>
  <symbol id="source" viewBox="0 0 24 24"><use href="#cog" x="5" y="3" width="20" height="20"/><path d="M1 4q6-6 9 1l-1 4 3 3-3 3-4-5q-3 1-4-2l4 1 2-2-2-3z" fill="#fff" stroke="#777" stroke-width=".6"/><path d="M13 13l8 7" stroke="#3a3106" stroke-width="6"/><path d="M13 13l7.500 6.500" stroke="#f2d678" stroke-width="4.200"/></symbol>
  <symbol id="cube" viewBox="0 0 24 24"><path d="M12 .8L23 8 12 14 1 8z" fill="#f58e8e" stroke="#c00f0f" stroke-width="1.500"/><path d="M1 9l10.500 6v8.500L1 18z" fill="#8be436" stroke="#4a9a10"/><path d="M23 9l-10.500 6v8.500L23 18z" fill="#ffe84a" stroke="#b99a0a"/></symbol>
  <symbol id="srcfields" viewBox="0 0 24 24"><rect x=".7" y="1.500" width="22.600" height="22" fill="#e9f1fa" stroke="#8fb6e2"/><path d="M1 2h22v5H1z" fill="#8fb6e2"/><path d="M2 10h4M13 10h9M2 13h4M13 13h9M2 16h4M13 16h9M2 19h4M13 19h9M2 21.500h4M13 21.500h9M13 4.500h9" stroke="#4f7fb8" stroke-width="1.200"/><rect x="5.500" y=".5" width="6" height="23" fill="#f3e7b0" stroke="#f6f24a" stroke-width="1.400"/></symbol>
  <symbol id="form" viewBox="0 0 24 24"><rect x=".7" y=".7" width="22.600" height="22.600" fill="#cfdcc4" stroke="#8fb0a8" stroke-width="1.400"/><path d="M4 7h4M4 17h4" stroke="#56706c" stroke-width="2"/><path d="M10.500 4h9v6h-9zM10.500 14h9v6h-9z" fill="#e3ecd8" stroke="#7a9e98" stroke-width="1.300"/></symbol>
  <symbol id="join" viewBox="0 0 24 24"><circle cx="2.500" cy="12" r="2.500" fill="#4a7fc0" stroke="#163a66"/><path d="M6 12L20 1v5h4v13h-3v4z" fill="url(#gb)" stroke="#1f4576"/></symbol>
  <symbol id="storage" viewBox="0 0 24 24"><path d="M8 1h9l6 6v16H8z" fill="#fff"/><path d="M17 1v6h6z" fill="#bbb"/><path d="M0 8v13q8 4 15 0V8z" fill="#9a9a9a" stroke="#555"/><ellipse cx="7.500" cy="8" rx="7.500" ry="2.600" fill="#ddd" stroke="#555"/><path d="M0 14.500q8 4 15 0" stroke="#eee" fill="none"/></symbol>
  <symbol id="actions" viewBox="0 0 24 24"><use href="#cog" x="4" y="0" width="20" height="20"/><path d="M12 6l6 4-6 4z" fill="#fff"/><circle cx="4" cy="20" r="3.500" fill="#6796cf" stroke="#bbb" stroke-width="1.500"/></symbol>
  <symbol id="eps" viewBox="0 0 24 24"><path d="M18 5q-5-4-9-1-3 4 3 7-8 1-7 6c1 6 9 6 13 2M18 5l-1 2" fill="none" stroke="#6a3f74" stroke-width="3" stroke-linecap="round"/></symbol>
  <symbol id="meta" viewBox="0 0 24 24"><path d="M3 0h12l5 5v19H3z" fill="#fff" stroke="#ccc" stroke-width=".6"/><path d="M5 8h9M5 11h9M5 14h7M5 17h12M5 20h12" stroke="#999"/><path d="M20 3l4 2-7 12-4 1 .5-4z" fill="#e5622a" stroke="#9c3c12" stroke-width=".7"/></symbol>
  <symbol id="deps" viewBox="0 0 24 24"><path d="M2 0h13v15H2zM9 7h14v15H9z" fill="#f0f0ee" stroke="#bbb" stroke-width=".6"/><path d="M11 2h10v7h3l-5 5-5-5h3V6h-6zM12 21H2v-7h-2l5-6 5 6H7v3h5z" fill="#6f9ee0" stroke="#3f6fb8" stroke-width=".7"/></symbol>
  <symbol id="legend" viewBox="0 0 24 24"><rect x="1.500" y="1" width="5.500" height="5.500" fill="#ffe01c" stroke="#d78a08"/><rect x="1.500" y="8.500" width="5.500" height="5.500" fill="#f0500f" stroke="#a82008"/><rect x="1.500" y="16" width="5.500" height="5.500" fill="#12b85c" stroke="#0a6a30"/><path d="M9 5h7M9 12h10M9 19h5" stroke="#9a9a9a" stroke-width="1.800"/></symbol>
  <symbol id="server" viewBox="0 0 24 24"><path d="M1 4h22v16H1z" fill="#eef3fa" stroke="#ddd" stroke-width="1.500"/><path d="M3 6h6l2 4-4 3-4-3zM14 7h7v4l-5 3zM8 14l5-1 2 5H8z" fill="#5d8fd0"/><path d="M15 19l7-7v7z" fill="#555"/></symbol>
  <symbol id="loupe" viewBox="0 0 14 14"><circle cx="5.500" cy="5.500" r="4.200" fill="none" stroke="#8e8c8a" stroke-width="1.300"/><path d="M8.500 8.500l4.500 4.500" stroke="#8e8c8a" stroke-width="1.800"/></symbol>
  <symbol id="check" viewBox="0 0 16 16"><path d="M1 9l3-2 2.500 4L12 0h3L7.500 15H6z" fill="#9fd33a" stroke="#5f8f18" stroke-width=".9"/></symbol>
  <symbol id="mouse" viewBox="0 0 16 18"><path d="M2 3q5-3 7 1l4 7q0 5-5 5Q1 12 2 3z" fill="#333"/><path d="M3 9l7-4M6 3l5 9" stroke="#ccc"/><path d="M10 6l5-4M11 9l4-2M2 15l3-2" stroke="#333"/></symbol>
  <symbol id="lock" viewBox="0 0 14 18"><path d="M3 9V5q0-4 4-4t4 4v4" fill="none" stroke="#444" stroke-width="1.800"/><rect x="1" y="8" width="12" height="9" rx="1" fill="#444"/></symbol>
  <symbol id="greyglobe" viewBox="0 0 16 18"><circle cx="8" cy="7.500" r="6.500" fill="none" stroke="#555" stroke-width="1.400"/><path d="M1.500 7.500h13M3 4h10M3 11h10M8 1v13M5 2q-3 5 0 11M11 2q3 5 0 11M2 14l6 3 6-3" fill="none" stroke="#555"/></symbol>
  <symbol id="talk" viewBox="0 0 18 18"><path d="M9 3q8 0 8 5.500T10 14l3 3q-4 0-6-3-6-1-6-5.500T9 3z" fill="#444"/><path d="M4 8.500h2M8 8.500h2M12 8.500h2" stroke="#eee" stroke-width="2"/></symbol>
  <symbol id="puzzle" viewBox="0 0 22 22"><path d="M1 10h4q-1-4 2-4t2 4h6v4q4-1 4 2t-4 2v4h-5q1-3-2-3t-2 3H1v-4q3 1 3-2t-3-2z" fill="#555"/><path d="M17 0l1.500 3.500L22 4l-2.500 2.500.5 3.500-3-2-3 2 .5-3.500L12 4l3.500-.5z" fill="#eee" stroke="#666"/></symbol>
</defs>
</svg>

<div class="app d-flex flex-column vh-100">
  <header>
    <div class="app-title d-flex align-items-center justify-content-between px-2">
      <div class="d-flex align-items-center gap-3 ps-2"><span class="win-dot lit"></span><span>QGIS</span></div>
      <div class="d-flex gap-1 pe-1"><span class="win-dot"></span><span class="win-dot"></span><span class="win-dot"></span></div>
    </div>
    <nav class="app-menu d-flex align-items-center">
      <a href="#">Pro<u>j</u>et</a><a href="#"><u>É</u>diter</a><a href="#">V<u>u</u>e</a><a href="#"><u>C</u>ouche</a><a href="#"><u>P</u>références</a><a href="#">E<u>x</u>tension</a><a href="#"><u>V</u>ecteur</a><a href="#"><u>R</u>aster</a><a href="#"><u>B</u>ase de données</a><a href="#"><u>I</u>nternet</a><a href="#"><u>T</u>raitement</a><a href="#"><u>A</u>ide</a>
    </nav>
  </header>

  <div class="bar-row d-flex align-items-center" role="toolbar" aria-label="Projet et navigation">
    <span class="grip"></span>
    <button class="tool" aria-label="Nouveau"><svg class="ic24"><use href="#new"/></svg></button>
    <button class="tool" aria-label="Ouvrir"><svg class="ic24"><use href="#open"/></svg></button>
    <button class="tool" aria-label="Enregistrer"><svg class="ic24"><use href="#save"/></svg></button>
    <button class="tool" aria-label="Enregistrer sous"><svg class="ic24"><use href="#saveas"/></svg></button>
    <button class="tool" aria-label="Mise en page"><svg class="ic24"><use href="#layout"/></svg></button>
    <button class="tool" aria-label="Gestionnaire"><svg class="ic24"><use href="#wrench"/></svg></button>
    <span class="grip"></span>
    <button class="tool held" aria-label="Se déplacer"><span><svg class="ic24"><use href="#hand"/></svg></span></button>
    <button class="tool" aria-label="Centrer"><svg class="ic24"><use href="#pan"/></svg></button>
    <button class="tool" aria-label="Zoom avant"><svg class="ic24"><use href="#zin"/></svg></button>
    <button class="tool" aria-label="Zoom arrière"><svg class="ic24"><use href="#zout"/></svg></button>
    <button class="tool faded" aria-label="Zoom natif"><svg class="ic24"><use href="#z11"/></svg></button>
    <button class="tool" aria-label="Zoom complet"><svg class="ic24"><use href="#zfull"/></svg></button>
    <button class="tool" aria-label="Zoom sélection"><svg class="ic24"><use href="#zsel"/></svg></button>
    <button class="tool" aria-label="Zoom couche"><svg class="ic24"><use href="#zlayer"/></svg></button>
    <button class="tool" aria-label="Zoom précédent"><svg class="ic24"><use href="#zlast"/></svg></button>
    <button class="tool faded" aria-label="Zoom suivant"><svg class="ic24"><use href="#znext"/></svg></button>
    <button class="tool" aria-label="Nouvelle carte"><svg class="ic24"><use href="#bm1"/></svg></button>
    <button class="tool" aria-label="Nouveau signet"><svg class="ic24"><use href="#bm2"/></svg></button>
    <button class="tool" aria-label="Signets"><svg class="ic24"><use href="#bm3"/></svg></button>
    <button class="tool" aria-label="Rafraîchir"><svg class="ic24"><use href="#refresh"/></svg></button>
    <span class="grip"></span>
    <button class="tool" aria-label="Identifier"><svg class="ic24"><use href="#identify"/></svg></button>
    <button class="tool faded" aria-label="Action"><svg class="ic24"><use href="#action"/></svg></button>
    <button class="drop faded" aria-label="Choix d'action"></button>
    <button class="tool" aria-label="Sélectionner"><svg class="ic24"><use href="#select"/></svg></button>
    <button class="drop" aria-label="Modes de sélection"></button>
    <button class="tool" aria-label="Sélection par valeur"><svg class="ic24"><use href="#selform"/></svg></button>
    <button class="drop" aria-label="Autres sélections"></button>
    <button class="tool" aria-label="Désélectionner"><svg class="ic24"><use href="#desel"/></svg></button>
    <button class="tool" aria-label="Table d'attributs"><svg class="ic24"><use href="#table"/></svg></button>
    <button class="tool" aria-label="Calculatrice"><svg class="ic24"><use href="#abacus"/></svg></button>
    <button class="tool" aria-label="Boîte à outils"><svg class="ic24"><use href="#gear"/></svg></button>
    <button class="tool" aria-label="Statistiques"><svg class="ic24"><use href="#sigma"/></svg></button>
    <button class="tool" aria-label="Mesurer"><svg class="ic24"><use href="#ruler"/></svg></button>
    <button class="drop" aria-label="Mesures"></button>
    <button class="tool" aria-label="Infobulles"><svg class="ic24"><use href="#maptip"/></svg></button>
    <button class="tool" aria-label="Annotation"><svg class="ic24"><use href="#annot"/></svg></button>
    <button class="drop" aria-label="Annotations"></button>
  </div>
  <div class="bar-row d-flex align-items-center" role="toolbar" aria-label="Couches et édition">
    <span class="grip"></span>
    <button class="tool" aria-label="Sources de données"><svg class="ic24"><use href="#source-mgr"/></svg></button>
    <button class="tool" aria-label="Nouveau GeoPackage"><svg class="ic24"><use href="#newgpkg"/></svg></button>
    <button class="tool" aria-label="Nouveau Shapefile"><svg class="ic24"><use href="#vnew"/></svg></button>
    <button class="tool" aria-label="Nouveau SpatiaLite"><svg class="ic24"><use href="#newfeather"/></svg></button>
    <button class="tool" aria-label="Couche temporaire"><svg class="ic24"><use href="#chip"/></svg></button>
    <span class="grip"></span>
    <button class="tool slim faded" aria-label="Modifications"><svg class="ic24"><use href="#pencils"/></svg></button>
    <button class="drop slim" aria-label="Menu des modifications"></button>
    <button class="tool" aria-label="Mode édition"><svg class="ic24"><use href="#pencil"/></svg></button>
    <button class="tool faded" aria-label="Enregistrer la couche"><svg class="ic24"><use href="#savedit"/></svg></button>
    <button class="tool faded" aria-label="Ajouter une entité"><svg class="ic24"><use href="#addpoly"/></svg></button>
    <button class="tool faded" aria-label="Déplacer une entité"><svg class="ic24"><use href="#movepoly"/></svg></button>
    <button class="drop" aria-label="Autres déplacements"></button>
    <button class="tool faded" aria-label="Outil de nœud"><svg class="ic24"><use href="#vertex"/></svg></button>
    <button class="tool faded" aria-label="Supprimer"><svg class="ic24"><use href="#trash"/></svg></button>
    <button class="tool faded" aria-label="Couper"><svg class="ic24"><use href="#cut"/></svg></button>
    <button class="tool faded" aria-label="Copier"><svg class="ic24"><use href="#copy"/></svg></button>
    <button class="tool faded" aria-label="Coller"><svg class="ic24"><use href="#paste"/></svg></button>
    <button class="tool faded" aria-label="Annuler"><svg class="ic24"><use href="#undo"/></svg></button>
    <button class="tool faded" aria-label="Rétablir"><svg class="ic24"><use href="#redo"/></svg></button>
    <span class="grip"></span>
    <button class="tool" aria-label="Étiquetage"><svg class="ic24"><use href="#abc"/></svg></button>
    <button class="tool" aria-label="Diagrammes"><svg class="ic24"><use href="#diagram"/></svg></button>
    <button class="tool" aria-label="Surligner les étiquettes"><svg class="ic24"><use href="#abh"/></svg></button>
    <button class="tool faded" aria-label="Épingler"><svg class="ic24"><use href="#abpin"/></svg></button>
    <button class="tool faded" aria-label="Afficher ou cacher"><svg class="ic24"><use href="#abeye"/></svg></button>
    <button class="tool faded" aria-label="Déplacer l'étiquette"><svg class="ic24"><use href="#abgo"/></svg></button>
    <button class="tool faded" aria-label="Pivoter l'étiquette"><svg class="ic24"><use href="#abrot"/></svg></button>
    <button class="tool faded" aria-label="Modifier l'étiquette"><svg class="ic24"><use href="#abedit"/></svg></button>
    <span class="grip"></span>
    <button class="tool" aria-label="MetaSearch"><svg class="ic24"><use href="#metasearch"/></svg></button>
    <span class="grip"></span>
    <button class="tool" aria-label="Console Python"><svg class="ic24"><use href="#console"/></svg></button>
    <button class="tool" aria-label="OpenLayers"><svg class="ic24"><use href="#leafs"/></svg></button>
    <button class="tool" aria-label="Outils"><svg class="ic24"><use href="#hammer"/></svg></button>
    <button class="tool" aria-label="Recharger"><svg class="ic24"><use href="#reload"/></svg></button>
    <button class="drop" aria-label="Choix d'extension"></button>
    <span class="grip"></span>
    <button class="tool" aria-label="Aide"><svg class="ic24"><use href="#book"/></svg></button>
    <span class="grip"></span>
    <button class="tool" aria-label="Topologie"><svg class="ic24"><use href="#topo"/></svg></button>
  </div>
  <div class="bar-row d-flex align-items-center" role="toolbar" aria-label="Extensions">
    <span class="grip"></span>
    <button class="tool" aria-label="Extension"><svg class="ic24"><use href="#plug"/></svg></button>
  </div>

  <main class="d-flex flex-grow-1" style="min-height:0">
    <aside class="dock d-flex flex-column">
      <div class="dock-head d-flex align-items-center justify-content-between"><span>Couches</span><span class="d-flex gap-2"><button class="mini" aria-label="Détacher"><svg width="7" height="7"><path d="M2.500.5h4v4h-4zM.5 2.500h4v4h-4z" fill="none" stroke="#555"/></svg></button><button class="mini" aria-label="Fermer"><svg width="7" height="7"><path d="M1 1l5 5M6 1L1 6" stroke="#444" stroke-width="2"/></svg></button></span></div>
      <div class="dock-tools d-flex align-items-center">
        <button aria-label="Style"><svg class="ic16"><use href="#brush"/></svg></button>
        <button aria-label="Groupe"><svg class="ic16"><use href="#addgroup"/></svg></button>
        <button aria-label="Visibilité"><svg class="ic16"><use href="#eye"/></svg><svg width="7" height="10"><path d="M0 4h7L3.500 10z" fill="#77706b"/></svg></button>
        <button aria-label="Filtrer"><svg class="ic16"><use href="#funnel"/></svg></button>
        <button aria-label="Filtre par expression"><svg class="ic16"><use href="#epsfil"/></svg></button>
        <button aria-label="Menu du filtre"><svg width="7" height="10"><path d="M0 4h7L3.500 10z" fill="#77706b"/></svg></button>
        <button aria-label="Tout étendre"><svg class="ic16"><use href="#expand"/></svg></button>
        <button aria-label="Tout réduire"><svg class="ic16"><use href="#collapse"/></svg></button>
        <button aria-label="Enlever"><svg class="ic16"><use href="#remove"/></svg></button>
      </div>
      <ul class="tree" style="height:230px">
        <li class="layer chosen"><span class="twist"></span><input class="tick" type="checkbox" checked aria-label="quartier_paris"><svg class="ic16"><rect x=".5" y=".5" width="15" height="15" fill="#7af062" stroke="#4f9a3e"/></svg><u>quartier_paris</u></li>
        <li class="layer"><span class="twist open"></span><input class="tick" type="checkbox" checked aria-label="OSM standard tile layer"><svg class="ic16"><use href="#tile"/></svg><span>OSM standard tile layer</span></li>
      </ul>
      <div class="dock-head d-flex align-items-center mt-1"><span>Explorateur</span></div>
      <div class="dock-tools d-flex align-items-center">
        <button aria-label="Ajouter"><svg class="ic16"><use href="#addlayer"/></svg></button>
        <button aria-label="Actualiser"><svg class="ic16"><use href="#refresh"/></svg></button>
        <button aria-label="Filtrer l'explorateur"><svg class="ic16"><use href="#funnel"/></svg></button>
        <button aria-label="Réduire"><svg class="ic16"><use href="#collapse"/></svg></button>
        <button aria-label="Propriétés"><svg class="ic16"><use href="#info"/></svg></button>
      </div>
      <ul class="tree flex-grow-1">
        <li><span class="twist"></span><svg class="ic16"><use href="#star"/></svg>Marque-pages</li>
        <li><span class="twist shut"></span><svg class="ic16"><use href="#folder"/></svg>Accueil</li>
        <li><span class="twist shut"></span><svg class="ic16"><use href="#folder"/></svg>/</li>
        <li><span class="twist"></span><svg class="ic16"><use href="#box"/></svg>GeoPackage</li>
        <li><span class="twist"></span><svg class="ic16"><use href="#feather"/></svg>SpatiaLite</li>
        <li><span class="twist"></span><svg class="ic16"><use href="#elephant"/></svg>PostGIS</li>
        <li><span class="twist shut"></span><svg class="ic16"><use href="#mssql"/></svg>MSSQL</li>
        <li><span class="twist shut"></span><svg class="ic16"><use href="#db2"/></svg>DB2</li>
        <li><span class="twist"></span><svg class="ic16"><use href="#globe"/></svg>WMS</li>
        <li><span class="twist open"></span><svg class="ic16"><use href="#globe"/></svg>XYZ Tiles</li>
        <li class="sub"><svg class="ic16"><use href="#tile"/></svg>Hillshade</li>
        <li class="sub"><svg class="ic16"><use href="#tile"/></svg>openstreetmap.se</li>
        <li class="sub chosen fit"><svg class="ic16"><use href="#tile"/></svg>OSM standard tile layer</li>
        <li class="sub"><svg class="ic16"><use href="#tile"/></svg>osm tiles</li>
        <li class="sub"><svg class="ic16"><use href="#tile"/></svg>Transport Map</li>
        <li><span class="twist"></span><svg class="ic16"><use href="#wcs"/></svg>WCS</li>
        <li><span class="twist"></span><svg class="ic16"><use href="#wfs"/></svg>WFS</li>
        <li><span class="twist"></span><svg class="ic16"><use href="#ows"/></svg>OWS</li>
        <li><span class="twist"></span><svg class="ic16"><use href="#arcgis"/></svg>ArcGisMapServer</li>
        <li><span class="twist"></span><svg class="ic16"><use href="#arcgisf"/></svg>ArcGisFeatureServer</li>
        <li><span class="twist"></span><svg class="ic16"><use href="#geonode"/></svg>GeoNode</li>
      </ul>
    </aside>
    <section class="map-box flex-grow-1 ms-1" aria-label="Carte">
      <svg viewBox="408 173 1511 824" preserveAspectRatio="xMaxYMid slice">
        <defs>
          <pattern id="st" width="88" height="80" patternUnits="userSpaceOnUse"><g id="blk"><path d="M4 6h12v6H4zM30 20l10 3-2 8-9-2zM60 8h14v5H60zM12 40l9 2-2 9-9-2zM50 46h12v9H50zM70 60l10-3 2 8-10 3z" fill="#cdbab6" opacity=".8"/><path d="M22 58h12v9H22zM72 30h9v10h-9z" fill="#c9e8b6" opacity=".6"/><path d="M44 4h8v5h-8zM2 66h9v6H2z" fill="#f3cfc8" opacity=".8"/><path d="M0 14L88 2M0 36l40-8 48 6M0 58l30-4 58 8M0 76l50-6 38 6M12 0l6 80M34 0l-6 40 8 40M54 0l4 30-8 50M76 0l-4 36 6 44M18 14l16 16M58 30l16 18M28 54l22-22M60 60l20-20M0 46h14M66 2l8 16M36 66l16 4M44 0v28M64 34v26M22 26v14M4 58v14M84 4l-2 30" fill="none" stroke="#fff" stroke-width="1.200"/></g></pattern>
          <pattern id="st2" width="88" height="80" patternUnits="userSpaceOnUse" patternTransform="rotate(38)"><use href="#blk"/></pattern>
          <pattern id="st3" width="88" height="80" patternUnits="userSpaceOnUse" patternTransform="rotate(-24) scale(.8)"><use href="#blk"/></pattern>
          <pattern id="graves" width="11" height="10" patternUnits="userSpaceOnUse"><path d="M2 2h2v1H2zM7 5h1v2H7zM3 8h1v1H3z" fill="#e05050"/></pattern>
        </defs>
        <rect x="400" y="160" width="1530" height="850" fill="#e8dadb"/>
        <rect x="400" y="160" width="1530" height="850" fill="url(#st)"/>
        <path d="M1560 400l200-60 160 100v140l-160 60-190-40z" fill="#e8dadb"/><path d="M1560 400l200-60 160 100v140l-160 60-190-40z" fill="url(#st2)"/>
        <path d="M1720 290l200-20v130l-170 10zM1400 900l160-30 70 130h-230zM400 940h300v60H400zM700 160h260v60H700z" fill="#e8dadb"/><path d="M1720 290l200-20v130l-170 10zM1400 900l160-30 70 130h-230zM400 940h300v60H400zM700 160h260v60H700z" fill="url(#st3)"/>

        <g transform="translate(1400 160) scale(.333333)" fill="none" stroke-linejoin="round">
          <path d="M270 40h380l-70 80-130 105-240-170z" fill="#a5c0ab"/>
          <path d="M745 545l90-55 60 50-10 80-80-15-50 20z" fill="#a9cf98"/>
          <path d="M660 490l60 10-10 90-60-30zM940 530l80-30 40 40-60 70-60-20zM1130 120l110 10-20 60-90-10z" fill="#bfe2c4"/><path d="M940 530l80-30 40 40-60 70-60-20zM1130 120l110 10-20 60-90-10z" fill="url(#graves)"/>
          <path d="M1050 650l90-60 80 60-40 110-80-20z" fill="#cfc888"/><path d="M1040 690l70-50 60 60-50 60z" fill="#e8c4c0" stroke="#c9a39c" stroke-width="3"/>
          <path d="M510 620l90-25 10 35-90 25zM1250 1150l120-50 30 60-60 60-110 10z" fill="#a6cba2"/>
          <path d="M1140 1250l80-20-30 90h-90zM1130 1350l150-40 30 90-110 40z" fill="#a8c0a2"/><path d="M1200 1300l120 30-60 100-70 0z" fill="url(#graves)"/>
          <path d="M700 1240l100-20v90l-90 10z" fill="#c0e0c0"/>
          <path d="M680 2280l100-20 70 60 60 70-200 60-50-90z" fill="#c2dab4"/>
          <path d="M230 300q300-50 640-30l200 60 300-80 190 100v60l-300-60-260-10-330-20-240 20-200-30z" fill="#bcb0b0" opacity=".8"/>
          <path d="M200 305q300-50 680-20M880 280l130-30M960 340h330q110 10 270 90M1000 330l80-50q230-10 480 90M840 60q10 150 60 220M840 60q60 90 200 90t260-50q120-10 160 60l40 30" stroke="#635a5a" stroke-width="7"/>
          <path d="M360 290q280-20 500-10M1100 300q200 0 450 110" stroke="#6d6464" stroke-width="22" stroke-dasharray="30 4"/><path d="M200 305q300-50 680-20M960 340h330q110 10 270 90M840 60q60 90 200 90t260-50" stroke="#ddd" stroke-width="2" stroke-dasharray="20 14"/>
          <path d="M410 375q130 10 260-25l170-40 160-60 490-130" stroke="#a8c8dc" stroke-width="20"/><path d="M410 375q130 10 260-25l170-40 160-60 490-130" stroke="#4f68d8" stroke-width="4" stroke-dasharray="5 6"/>
          <g stroke="#c98fd4" stroke-width="5" stroke-dasharray="14 6 5 6" opacity=".75"><path d="M500 110l130 90 50 140M690 480l-40 80-170 140M740 560l20 100-20 160M1040 520l-80-80-20-120M900 800l-200 30-120 60M1330 820l120 30 60 200 30 120M1000 1430l230 150 200 40M870 1490l-20 60-90 20-40 60"/></g>
          <g stroke="#fff" stroke-width="6"><path d="M300 410l290 60 80 400M700 380l-80 220-100 20M500 870l-80-130 150-130 110-60 60 80M590 780l400-100M990 680v220M1320 350l-240 260-120 70M1080 600l170-50M870 1120l160 160M580 390l-90 270M1340 360l160 150M870 1120h280M540 950l200 60 180 260M1270 1430l120 180M1060 1500l200-90 120-170"/></g>
          <g stroke="#f6f0a0" stroke-width="12"><path d="M50 40l220 290M380 290l50 60v180l40 250M960 140l50 220 45 90 20 130-60 50-300 150-140 60M740 370l320 90 130 40 80 60 160 20 100 15M800 40l170 90M980 680l130 70 20 70v50l-60 80-20 30-120 20-90-50-130-80H560l-80-20M670 880l-170 210M720 880l110 180 60 150 30 120M950 1000l90 190M1130 820l320 50 50 80-5 180-60 90h-110l-160 60-100 80M1560 1010l-170 50-180 100-120 90M580 1290l190 60h130M1110 1490l100 80 160-50 120 10 70-30M560 1620l380 20 150 10 160-60 280 110M1240 1600l-80 70M1260 1590l-10-90 80-10M910 1350l10-60M570 1600v280l40 110M530 1750h60"/></g>
          <g stroke="#f0b98a" stroke-width="13"><path d="M210 40L50 230M700 45L380 290 240 410M235 505l260-80 590-170 480-130M1060 40v130l-80 60M1200 45l360 80M1470 40l40 200-10 400M1320 780l150 10 90 60M1250 850l-80 170-140 140 10 40-20 120M535 1465l350-95 170 30 280-120M1020 1280l40 110M541 1670l430 50M1560 1920l-160 260M290 2120l200 220 30 100 90 90M90 2230l280 280M1400 2360h160"/></g>
          <g stroke="#c76d90" stroke-width="3" stroke-dasharray="12 8"><path d="M235 505l260-80 590-170M541 1670l430 50M960 140l50 220 45 90M1560 1920l-160 260M90 2230l280 280"/></g>
          <g stroke="#ee7088" stroke-width="24"><path d="M1210 50l180 40 90 110M1540 40l-60 240 60 160 10 180M1550 620l-80 50-150 0-200 130-110 90-100 50-170 170q-90 50-200 40l-60-30M950 890h60l200 140 60 90 80 90" /><path d="M130 2240q60 100 170 140 200 60 310 70l260 5 200 20M1560 2160l-130 40"/></g>
          <g stroke="#a9405a" stroke-width="3"><path d="M1480 280l60 160M970 880q30 0 40 10"/></g>
          <g stroke="#a8c8dc" stroke-width="36"><path d="M90 2230q120 150 340 210l300 40 260 20 260-20M1560 2120q-90 10-100 90-10 110 40 200"/></g><path d="M90 2230q120 150 340 210l300 40 260 20" stroke="#8b7bd0" stroke-width="3" stroke-dasharray="20 10"/>
          <g stroke="#f6f0a0" stroke-width="11"><path d="M0 2400l300-130M120 2450l250-130M380 2230l-140 130M600 2270v240M500 2330l110-60"/></g>
          <path d="M190 2190q120 60 240 140 60 60 90 180M230 2180q150 60 270 200l50 130M1050 1660q200 10 330 80 110 60 140 170v100q-10 130-80 180l-60 380" stroke="#6a6060" stroke-width="12"/><path d="M1050 1660q200 10 330 80 110 60 140 170" stroke="#ddd" stroke-width="3" stroke-dasharray="20 16"/>
        </g>
        <!-- bands above and below the properties window -->
        <g fill="none">
          <path d="M835 213l40-42h36l-56 42z" fill="#a8c8dc"/><path d="M480 190l30-10 10 15-30 10zM745 200l30-10 8 12-25 10z" fill="#c2dab4"/><path d="M408 985l12-10 14 20h-26zM785 958l30-8 10 15-25 10zM660 985l30-15 20 25h-50z" fill="#b2d0a0"/><path d="M700 962h50v30h-50z" fill="url(#graves)"/>
          <path d="M408 182q50 10 110-10M435 213l60-40M680 213l60-32q50-10 90 15M786 173l50 40M790 173l52 40M1060 173l-80 40M1170 173l90 40M1340 160l40 53" stroke="#6a6060" stroke-width="3.500"/>
          <path d="M490 213l60-35 90 15 60-13M642 173l6 40M700 175l15 38M820 173l20 30M930 173l60 40M990 173l-50 40M1100 173l90 40M1190 173l-80 40M1300 173l60 40M1385 173l-40 40" stroke="#f6f0a0" stroke-width="4"/>
          <path d="M543 173l3 40M838 213l50-40M905 173l20 40M1020 173l-60 40M1060 213l80-40M1220 173l30 40M1270 173l-60 40M1410 173l-50 40" stroke="#f0b98a" stroke-width="4"/><path d="M408 186q22 10 20 27" stroke="#f08870" stroke-width="7"/>
          <path d="M425 950l-13 32" stroke="#f08870" stroke-width="8"/>
          <path d="M440 995l60-30-20-15M490 970l30 27M607 949v22M660 995l40-42 40 5 35 40M750 949l-5 30M775 990l30-25 40-15M850 952l70 10 90-5M1010 997l40-20 60 15M920 980l50-25 60 30-30 14M870 997l60-35" stroke="#f6f0a0" stroke-width="4"/>
          <path d="M530 952h60M560 965l50 10 60-26M630 990q-10-20 30-25l20-16M650 995l-20-8M970 949l-90 48M1050 949v45" stroke="#f0b98a" stroke-width="4"/>
          <path d="M594 997q10-30 70-45l10-5M510 970l20 15 20 12M810 997q50-15 64-48M870 949l14 48" stroke="#5c5354" stroke-width="4"/><path d="M594 997q10-30 70-45" stroke="#cfc8c6" stroke-width="1"/>
        </g>
        <g font-size="13" fill="#423d3b" text-anchor="middle">
          <text x="588" y="175">La Garenne-</text><text x="588" y="194">Colombes</text><text x="463" y="962">Bellevue</text><text x="541" y="967">Meudon-sur-</text><text x="541" y="983">Seine</text><text x="885" y="981">Malakoff</text>
          <text x="1751" y="190">Bobigny</text><text x="1498" y="277">Pantin</text><text x="1807" y="331">Noisy-le-Sec</text><text x="1696" y="377">Romainville</text><text x="1518" y="387">Pré-Saint-</text><text x="1509" y="405">Gervais</text><text x="1579" y="428">Les Lilas</text><text x="1588" y="524">Bagnolet</text><text x="1728" y="582">Montreuil</text><text x="1719" y="714">Vincennes</text><text x="1583" y="764">Saint-Mandé</text><text x="1901" y="676">Fontenay-s-</text><text x="1914" y="694">Bois</text><text x="1527" y="933">Charenton-</text><text x="1528" y="950">le-Pont</text>
        </g>
        <g font-size="11" font-style="italic" fill="#53615a" text-anchor="middle"><text x="1546" y="181" font-size="12">Cimetière</text><text x="1546" y="194" font-size="12">parisien</text><text x="1546" y="206" font-size="12">de Pantin</text><g fill="#9a7395"><text x="1643" y="205">Zone industrielle</text><text x="1643" y="217">Les Vignes</text></g></g>
        <g font-size="11" font-style="italic" fill="#b8333f" text-anchor="end"><text x="1485" y="250">Porte de la Villette</text><text x="1580" y="467">Les Lilas</text><text x="1680" y="516">Montreuil</text><text x="1607" y="582">Bagnolet</text><text x="1610" y="631">Montreuil</text><text x="1617" y="673">Montreuil</text><text x="1616" y="696">Vincennes</text><text x="1585" y="811">Porte Dorée</text><text x="1488" y="887">Porte Bercy</text><text x="1600" y="972">Charenton</text><text x="1935" y="364">Échangeur</text><text x="1870" y="199">15</text><text x="1902" y="230">3</text><text x="1912" y="400">16</text><text x="1758" y="441">3</text><text x="1679" y="503">2</text><text x="1618" y="548">2</text><text x="1650" y="981">3</text><text x="1885" y="896">4</text><text x="421" y="202">86</text><text x="1156" y="989">Porte de G.</text><text x="1221" y="981">Porte d'I</text><text x="1336" y="972">Porte d'Ivry</text></g>
        <g font-size="10" fill="#3f3a35" text-anchor="middle"><text transform="translate(1802 239) rotate(-15)">Rue de Paris</text><text transform="translate(1653 631) rotate(-14)">Rue de Paris</text><text transform="translate(1789 565) rotate(-35)">Rue de Rosny</text><text transform="translate(1541 341) rotate(84)">Rue Jules Auffret</text></g>
        <g font-size="11" font-style="italic" fill="#5b84c4" text-anchor="middle"><text transform="translate(1786 232) rotate(-15)">Canal de l'Ourcq</text><text transform="translate(1478 953) rotate(32)">La Seine</text><text transform="translate(1734 989) rotate(4)">La Marne</text><text transform="translate(1887 936) rotate(83)">La Marne</text></g>
        <g fill="#e6cbb8" stroke="#a98a70" stroke-width="1"><rect x="1557" y="211" width="38" height="17" rx="2"/><rect x="1682" y="254" width="46" height="18" rx="2"/><rect x="1805" y="423" width="38" height="18" rx="2"/><rect x="1781" y="503" width="40" height="17" rx="2" fill="#e8b0bc" stroke="#b0536a"/><rect x="1874" y="547" width="33" height="17" rx="2" fill="#dedcc4" stroke="#aaa888"/><rect x="1745" y="635" width="34" height="18" rx="2" fill="#dedcc4" stroke="#aaa888"/><rect x="1859" y="604" width="39" height="18" rx="2" fill="#dedcc4" stroke="#aaa888"/></g>
        <g font-size="10" fill="#4a3a2c" text-anchor="middle"><text x="1576" y="222">D 115</text><text x="1705" y="266">RNIL 3</text><text x="1824" y="435">N 302</text><text x="1801" y="515">A 186</text><text x="1890" y="559">D 41</text><text x="1762" y="648">D 40</text><text x="1878" y="617">D 241</text><text x="1346" y="182">N 301</text></g>
        <g font-size="11" font-style="italic" fill="#6f4f7a" text-anchor="middle"><text x="937" y="209">Clichy</text><text x="1284" y="182">Parc-Les-</text></g>
        <g fill="#53579c"><path d="M1438 206h6v6h-6zM1487 257h6v6h-6zM1562 298h6v6h-6zM1498 316h6v6h-6zM1631 279h6v6h-6zM1833 269h7v7h-7zM1692 613h6v6h-6zM1622 632h6v6h-6zM1680 707h6v6h-6zM1591 715h6v6h-6zM1654 724h6v6h-6zM1712 731h6v6h-6zM1856 739h6v6h-6zM1904 816h6v6h-6zM1520 893h6v6h-6zM1564 936h6v6h-6zM1581 547h6v6h-6zM538 173h6v4h-6zM714 189h6v6h-6zM801 186h6v6h-6zM661 950h6v6h-6zM852 966h6v6h-6zM881 991h6v6h-6zM1012 965h6v6h-6zM1351 987h6v6h-6z"/></g>

        <g stroke="#29231f" stroke-width="1" fill="#68f64a" stroke-linejoin="round">
          <path d="M1300 240h90l24-12 18 4 15 12 14 13 13 33 5 38 3 22v21l5 14 13 13 15 10 27 9 8 16 10 20 7 35 2 38-1 25 4 49 5 50 6 47-2 20-7 47-14 62-7 5q18 5 34 0l30-16-3-17-4-20-4-9-5-8v-9l3-8 13-8 7 11 9 14 51 6v-2l21 3 4-32 16 1 1-13h34v8l51 9 33 8 19 9 11 12 7 12 13 18 2 7-2 13-5 11-13 11-7 12-3 17-1 15 9 2-4 25-9 28-5 12-3 10-22 18-30-2-24-6-43-1-28-2-1-9-13-3-4 2-1-7-9-12-12-12v-5l-18-6-17-2-27 2-17-6-30-1-13-5-17-16-12-14-14-7-47 19-24 15-15 11-102 0z"/>
          <path d="M1000 930l31 19 41 13 18 6-2 11 56 7 17 6 1-4 14 2 32-24 21 22h43l21-10 59-31v-19z"/>
        </g>
        <g transform="translate(1400 160) scale(.333333)" stroke="#29231f" stroke-width="3" fill="none">
          <path d="M42 582l196-77M42 742l34 48-19 2-14 88M42 920l45-20 92 5 66-7 60-14 145-64M179 905l13 70-12 55 4 14M42 1095l90-32 28-17 60-8 27-14 50 90 39 80-5 28 15 15 25 10 35-53 60-17 40-2M42 1245l33 107 88 53 70 137 15 70-6 40 57 60-34 148 35 60 38 85-38 22 30 27q70 0 110 50 90 80 160 72 20-10 25-50l70 10 46 12 44-90 8-50 32-36 240 42 140-48 50 70 150 155M42 1442l70-18 50-20 70-18 110-96M371 1247q-20 40-40 60l-15 15M42 1590l140 30 60 8 300 42M42 1825l65 95 50 80 130 130M42 2178l46 48"/>
        </g>
        <g stroke="#29231f" fill="none"><path d="M1075 949l-3 13M1157 949l5 8-3 34M1278 949l15 29"/></g>
        <g font-size="13" fill="#423d3b"><text x="1691" y="980">Saint-Maurice</text><text x="1849" y="965">Joinville-le-</text><text x="1863" y="982">Pont</text></g>
      </svg>
    </section>
  </main>

  <footer class="status d-flex align-items-center">
    <div class="find me-auto" style="width:292px"><svg width="14" height="14"><use href="#loupe"/></svg><input class="field" type="search" placeholder="Taper pour trouver (Ctrl+K)" aria-label="Taper pour trouver"></div>
    <label for="coord" class="me-2">Coordonnée</label><input id="coord" class="field me-2" style="width:129px" value="246787,6253870">
    <svg width="14" height="18" class="me-2"><use href="#mouse"/></svg>
    <label for="scale" class="ms-1 me-1">Échelle</label><select id="scale" class="field downsel me-2" style="width:112px"><option>1:71 878</option></select>
    <svg width="12" height="18" class="me-2"><use href="#lock"/></svg>
    <label for="zoomv" class="ms-2 me-1">Loupe</label><input id="zoomv" class="field spin me-2" style="width:97px" value="100%">
    <label for="rot" class="ms-2 me-2">Rotation</label><input id="rot" class="field spin me-2" style="width:95px" value="0,0 °">
    <input id="rendu" class="tick me-2" type="checkbox" checked><label for="rendu" class="me-3">Rendu</label>
    <svg width="16" height="18" class="me-2"><use href="#greyglobe"/></svg><span class="me-3">EPSG:3857</span>
    <svg width="18" height="18" class="me-2"><use href="#talk"/></svg>
    <svg width="22" height="22" class="ms-1"><use href="#puzzle"/></svg>
  </footer>
</div>
<div class="shade"></div>

<section class="props d-flex flex-column" role="dialog" aria-label="Propriétés de la couche">
  <div class="props-title d-flex align-items-center flex-shrink-0">
    <svg width="14" height="14"><circle cx="7" cy="7" r="6.500" fill="#2f2e2a"/><circle cx="7" cy="6.500" r="3.500" fill="#dfdbd2"/></svg>
    <span class="me-auto">Propriétés de la couche - quartier_paris | Formulaire d'attributs</span>
    <button class="shut-btn" aria-label="Fermer">×</button>
  </div>
  <div class="d-flex flex-grow-1" style="min-height:0">
    <div class="side d-flex flex-column">
      <div class="find"><svg width="14" height="14"><use href="#loupe"/></svg><input class="field" type="search" aria-label="Rechercher"></div>
      <div class="d-flex flex-grow-1" style="min-height:0">
        <nav class="d-flex flex-column flex-grow-1">
          <a href="#"><svg class="ic24"><use href="#info"/></svg>Information</a>
          <a href="#"><svg class="ic24"><use href="#source"/></svg>Source</a>
          <a href="#"><svg class="ic24"><use href="#brush"/></svg>Symbologie</a>
          <a href="#"><svg class="ic24"><use href="#abc"/></svg>Étiquettes</a>
          <a href="#"><svg class="ic24"><use href="#diagram"/></svg>Diagrammes</a>
          <a href="#"><svg class="ic24"><use href="#cube"/></svg>Vue 3D</a>
          <a href="#"><svg class="ic24"><use href="#srcfields"/></svg>Champs source</a>
          <a href="#" class="here"><svg class="ic24"><use href="#form"/></svg>Formulaire d'attributs</a>
          <a href="#"><svg class="ic24"><use href="#join"/></svg>Jointures</a>
          <a href="#"><svg class="ic24"><use href="#storage"/></svg>Stockage auxiliaire</a>
          <a href="#"><svg class="ic24"><use href="#actions"/></svg>Actions</a>
          <a href="#"><svg class="ic24"><use href="#tip"/></svg>Infobulles</a>
          <a href="#"><svg class="ic24"><use href="#broom"/></svg>Rendu</a>
          <a href="#"><svg class="ic24"><use href="#eps"/></svg>Variables</a>
          <a href="#"><svg class="ic24"><use href="#meta"/></svg>Métadonnées</a>
          <a href="#"><svg class="ic24"><use href="#deps"/></svg>Dépendances</a>
          <a href="#"><svg class="ic24"><use href="#legend"/></svg>Légende</a>
          <a href="#"><svg class="ic24"><use href="#server"/></svg>QGIS Server</a>
        </nav>
        <div class="scroller"><i></i><b class="thumb-side"></b><span class="flex-grow-1"></span><i></i></div>
      </div>
    </div>
    <div class="right-part d-flex flex-column flex-grow-1">
      <div class="d-flex align-items-center">
        <select class="updown w-gen" aria-label="Mode de génération"><option>Génération automatique</option></select>
        <button class="push tiny mx-2" aria-label="Code Python"><svg width="14" height="14"><use href="#python"/></svg></button>
        <select class="updown w-aff" aria-label="Affichage du formulaire"><option>Afficher le formulaire à l'ajout d'un élément (réglage global)</option></select>
      </div>
      <div class="d-flex flex-grow-1" style="min-height:0;padding-top:7px">
        <div class="fields">
          <div class="fields-head">Contrôles disponibles</div>
          <ul>
            <li class="group-row"><span class="gap-cell open"></span><span>Fields</span></li>
            <li class="chosen">n_sq_qu</li><li>perimetre</li><li>objectid</li><li>longueur</li><li>c_qu</li><li>surface</li><li>geom_x_y</li><li>n_sq_ar</li><li>c_quinsee</li><li>l_qu</li><li>c_ar</li>
            <li class="group-row"><span class="gap-cell"></span><span>Relations</span></li>
          </ul>
        </div>
        <div class="handle"></div>
        <div class="editor d-flex flex-grow-1">
          <form class="form-area d-flex flex-column flex-grow-1">
            <h2 class="sec">Général</h2>
            <div class="gap-row d-flex align-items-center"><label class="lab-a" for="alias">Alias</label><input id="alias" class="field flex-grow-1"></div>
            <div class="gap-row">Commentaire</div>
            <div class="gap-row d-flex gap-4"><span class="row-check ps-0 ms-0"><input class="tick ms-1" type="checkbox" id="edi" checked><label for="edi">Éditable</label></span><span class="row-check ps-0"><input class="tick" type="checkbox" id="som"><label for="som">Étiquette au sommet</label></span></div>
            <div class="type-block">
              <h2 class="sec">Type d'outil</h2>
              <select class="updown w-100 gap-row" aria-label="Type d'outil"><option>Cachée</option></select>
              <div class="mt-3 ps-2">Un attribut caché sera invisible - l'utilisateur ne pourra pas voir son contenu.</div>
            </div>
            <h2 class="sec">Contraintes</h2>
            <div class="gap-row d-flex"><span class="row-check lab-b"><input class="tick" type="checkbox" id="nn"><label for="nn">Non nul</label></span><span class="row-check off"><input class="tick" type="checkbox" id="rn" disabled><label for="rn">Renforcer la contrainte non null</label></span></div>
            <div class="d-flex flex-shrink-0 mt-2"><span class="row-check lab-b"><input class="tick" type="checkbox" id="un"><label for="un">Unique</label></span><span class="row-check off"><input class="tick" type="checkbox" id="ru" disabled><label for="ru">Renforcer la contrainte de valeur unique</label></span></div>
            <div class="d-flex align-items-center flex-shrink-0 mt-2"><label class="lab-b" for="expr">Expression</label><select id="expr" class="field downsel flex-grow-1"><option></option></select><button type="button" class="push tiny ms-2" aria-label="Éditeur d'expression"><svg width="14" height="14"><use href="#eps"/></svg></button></div>
            <div class="d-flex align-items-center flex-shrink-0 mt-2"><label class="lab-b" for="desc">Description de l'expression</label><input id="desc" class="field flex-grow-1"></div>
          </form>
          <div class="scroller"><i></i><b class="thumb-form"></b><span class="flex-grow-1"></span><i></i></div>
        </div>
      </div>
      <div class="foot d-flex gap-2">
        <button class="push" style="width:84px"><svg width="16" height="16" viewBox="0 0 16 16"><circle cx="8" cy="8" r="7.500" fill="#3d7fc4" stroke="#20568f"/><text x="8" y="12.500" font-size="12" font-weight="700" text-anchor="middle" fill="#fff">?</text></svg>Aide</button>
        <button class="push me-auto" style="width:91px;gap:24px"><span class="ms-2">Style</span><svg width="8" height="7"><path d="M0 0h8L4 6z" fill="#777"/></svg></button>
        <button class="push" style="width:104px"><svg width="16" height="16"><use href="#check"/></svg>Appliquer</button>
        <button class="push" style="width:91px"><svg width="16" height="16" viewBox="0 0 16 16"><circle cx="8" cy="8" r="7.500" fill="#d62f2f" stroke="#8f1414"/><path d="M5 5l6 6M11 5l-6 6" stroke="#fff" stroke-width="2.200"/></svg><span><u>A</u>nnuler</span></button>
        <button class="push" style="width:83px"><svg width="16" height="16"><use href="#check"/></svg><span><u>O</u>K</span></button>
      </div>
    </div>
  </div>
</section>

<svg class="ring" width="165" height="68" viewBox="0 0 165 68" aria-hidden="true"><path d="M136 37v15l4-4 3 6 3-1-3-6h5z" fill="#fff" stroke="#222"/><ellipse cx="82.500" cy="34" rx="77" ry="28" fill="none" stroke="#f00" stroke-width="11"/></svg>
</body>
</html>
